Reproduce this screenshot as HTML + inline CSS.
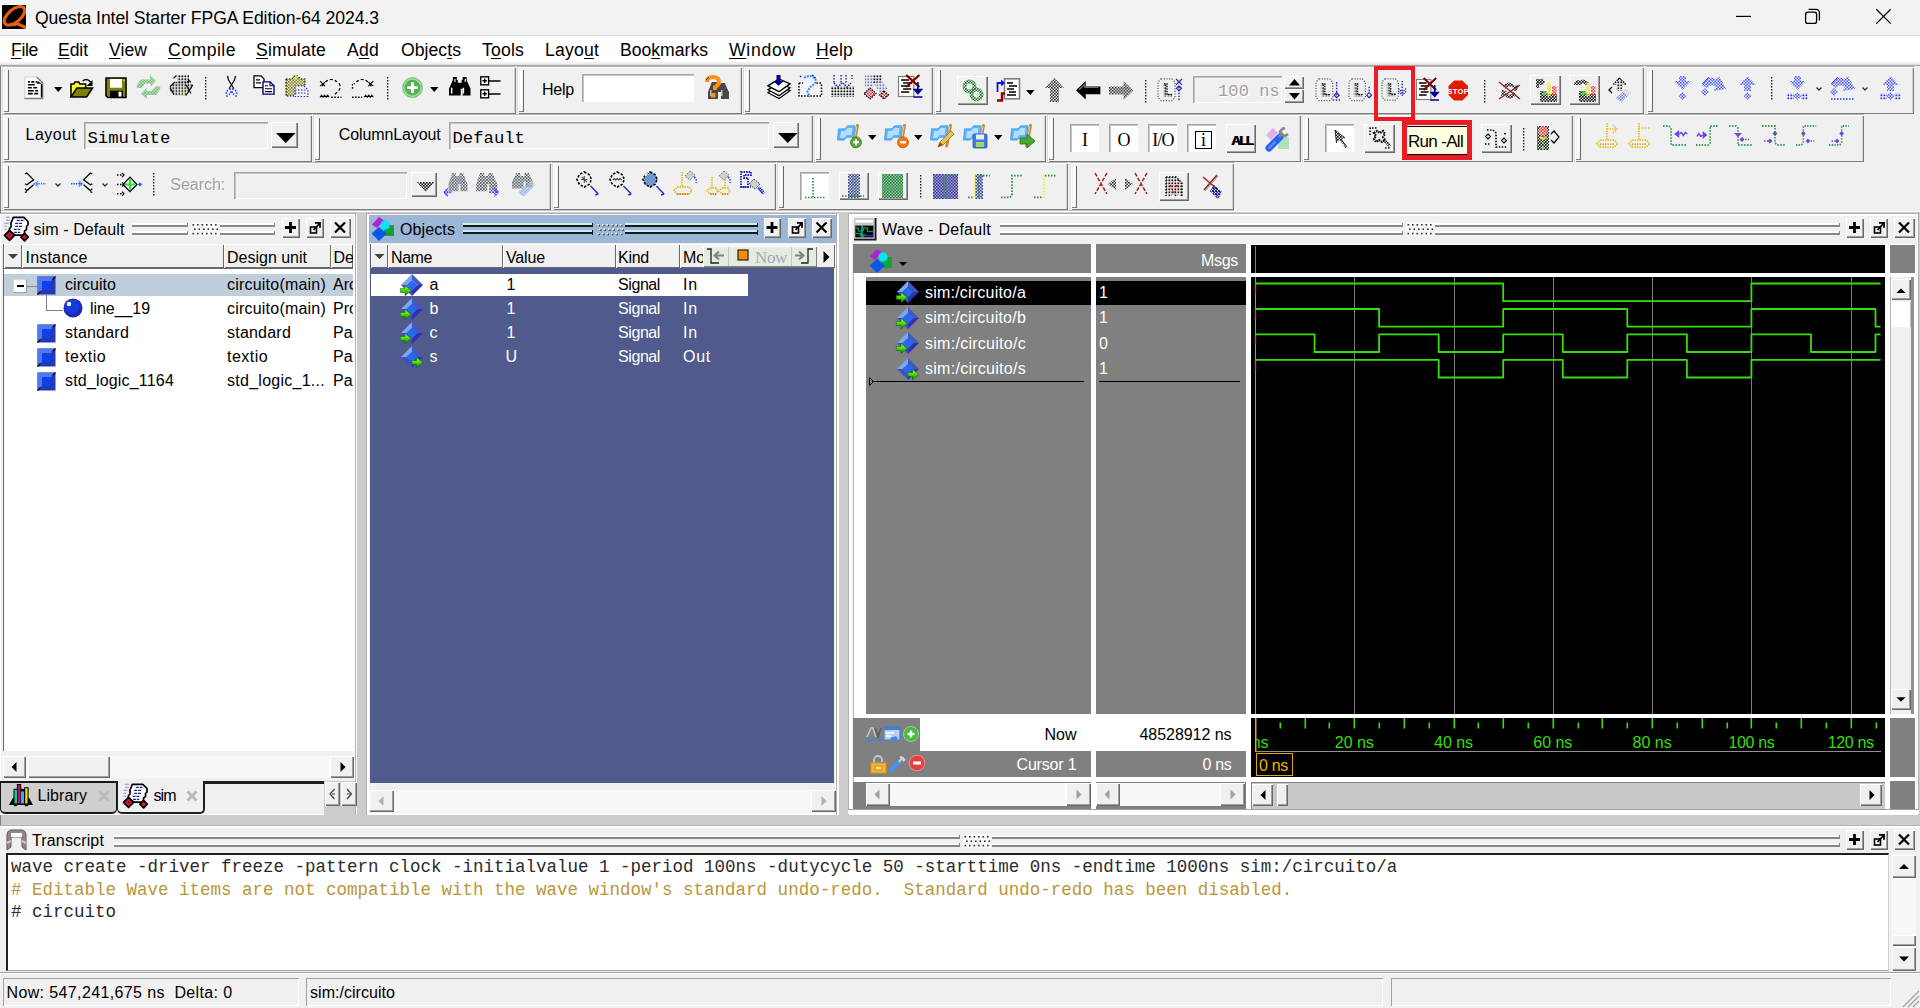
<!DOCTYPE html>
<html><head><meta charset="utf-8"><title>Questa Intel Starter FPGA Edition-64 2024.3</title>
<style>
html,body{margin:0;padding:0;}
body{width:1920px;height:1008px;overflow:hidden;background:#f0f0f0;position:relative;font:16px/1 "Liberation Sans",sans-serif;}
.a{position:absolute;box-sizing:border-box;}
.t{position:absolute;white-space:pre;}
svg{position:absolute;overflow:visible;}
.tb{box-shadow:inset 0 1px #b8b8b8,inset 1px 0 #dcdcdc,inset 2px 2px #fff,inset -1px -1px #7c7c7c,inset -2px 0 #d4d4d4;background:#f0f0f0;}
.gr{border-right:1px solid #696969;border-bottom:1px solid #696969;border-left:2px solid #fff;}
.rs{box-shadow:inset 1px 1px #fff,inset -1px -1px #696969,inset -2px -2px #a0a0a0;background:#f0f0f0;}
.sk{box-shadow:inset 1px 1px #a0a0a0,inset -1px -1px #fff,inset 2px 2px #696969;}
.sk1{box-shadow:inset 1px 1px #a0a0a0,inset -1px -1px #fff;}
.sk2{box-shadow:inset 1px 1px #a4a4a4,inset 2px 2px #c4c4c4,inset -1px -1px #fff;}
.hd{box-shadow:inset 1px 1px #fff,inset -1px -1px #696969;background:#f0f0f0;}
.u{text-decoration:underline;text-decoration-thickness:1px;text-underline-offset:2px;}
</style></head>
<body>
<svg width="0" height="0" style="position:absolute"><defs><pattern id="p0" width="3" height="3" patternUnits="userSpaceOnUse"><rect width="1.6" height="1.6" fill="#5cb060"/><rect x="1.5" y="1.5" width="1.6" height="1.6" fill="#5cb060"/></pattern><pattern id="p1" width="3" height="3" patternUnits="userSpaceOnUse"><rect x="0.5" y="0.5" width="1.7" height="1.7" fill="#000"/></pattern><pattern id="p2" width="3" height="3" patternUnits="userSpaceOnUse"><rect width="1.6" height="1.6" fill="#808010"/><rect x="1.5" y="1.5" width="1.6" height="1.6" fill="#808010"/></pattern><pattern id="p3" width="3" height="3" patternUnits="userSpaceOnUse"><rect x="0.5" y="0.5" width="1.7" height="1.7" fill="#2030e0"/></pattern><pattern id="p4" width="3" height="3" patternUnits="userSpaceOnUse"><rect x="0.5" y="0.5" width="1.7" height="1.7" fill="#7070d0"/></pattern><pattern id="p5" width="3" height="3" patternUnits="userSpaceOnUse"><rect width="1.6" height="1.6" fill="#e02040"/><rect x="1.5" y="1.5" width="1.6" height="1.6" fill="#e02040"/></pattern><pattern id="p6" width="3" height="3" patternUnits="userSpaceOnUse"><rect width="1.6" height="1.6" fill="#107020"/><rect x="1.5" y="1.5" width="1.6" height="1.6" fill="#107020"/></pattern><pattern id="p7" width="3" height="3" patternUnits="userSpaceOnUse"><rect width="1.6" height="1.6" fill="#303030"/><rect x="1.5" y="1.5" width="1.6" height="1.6" fill="#303030"/></pattern><pattern id="p8" width="3" height="3" patternUnits="userSpaceOnUse"><rect width="1.6" height="1.6" fill="#000"/><rect x="1.5" y="1.5" width="1.6" height="1.6" fill="#000"/></pattern><pattern id="p9" width="3" height="3" patternUnits="userSpaceOnUse"><rect width="1.6" height="1.6" fill="#f0e020"/><rect x="1.5" y="1.5" width="1.6" height="1.6" fill="#f0e020"/></pattern><pattern id="p10" width="3" height="3" patternUnits="userSpaceOnUse"><rect width="1.6" height="1.6" fill="#f03030"/><rect x="1.5" y="1.5" width="1.6" height="1.6" fill="#f03030"/></pattern><pattern id="p11" width="3" height="3" patternUnits="userSpaceOnUse"><rect width="1.6" height="1.6" fill="#6080e0"/><rect x="1.5" y="1.5" width="1.6" height="1.6" fill="#6080e0"/></pattern><pattern id="p12" width="3" height="3" patternUnits="userSpaceOnUse"><rect width="1.6" height="1.6" fill="#5060ff"/><rect x="1.5" y="1.5" width="1.6" height="1.6" fill="#5060ff"/></pattern><pattern id="p13" width="3" height="3" patternUnits="userSpaceOnUse"><rect width="1.6" height="1.6" fill="#40a0ff"/><rect x="1.5" y="1.5" width="1.6" height="1.6" fill="#40a0ff"/></pattern><pattern id="p14" width="3" height="3" patternUnits="userSpaceOnUse"><rect x="0.5" y="0.5" width="1.7" height="1.7" fill="#2030ff"/></pattern><pattern id="p15" width="3" height="3" patternUnits="userSpaceOnUse"><rect width="1.6" height="1.6" fill="#ff2020"/><rect x="1.5" y="1.5" width="1.6" height="1.6" fill="#ff2020"/></pattern><pattern id="p16" width="3" height="3" patternUnits="userSpaceOnUse"><rect width="1.6" height="1.6" fill="#3080ff"/><rect x="1.5" y="1.5" width="1.6" height="1.6" fill="#3080ff"/></pattern><pattern id="p17" width="3" height="3" patternUnits="userSpaceOnUse"><rect width="1.6" height="1.6" fill="#3050ff"/><rect x="1.5" y="1.5" width="1.6" height="1.6" fill="#3050ff"/></pattern><pattern id="p18" width="3" height="3" patternUnits="userSpaceOnUse"><rect width="1.6" height="1.6" fill="#505860"/><rect x="1.5" y="1.5" width="1.6" height="1.6" fill="#505860"/></pattern><pattern id="p19" width="3" height="3" patternUnits="userSpaceOnUse"><rect width="1.6" height="1.6" fill="#2030ff"/><rect x="1.5" y="1.5" width="1.6" height="1.6" fill="#2030ff"/></pattern><pattern id="p20" width="3" height="3" patternUnits="userSpaceOnUse"><rect width="1.6" height="1.6" fill="#80a0f0"/><rect x="1.5" y="1.5" width="1.6" height="1.6" fill="#80a0f0"/></pattern><pattern id="p21" width="3" height="3" patternUnits="userSpaceOnUse"><rect width="1.6" height="1.6" fill="#c0c0c0"/><rect x="1.5" y="1.5" width="1.6" height="1.6" fill="#c0c0c0"/></pattern><pattern id="p22" width="3" height="3" patternUnits="userSpaceOnUse"><rect width="1.6" height="1.6" fill="#90b8e0"/><rect x="1.5" y="1.5" width="1.6" height="1.6" fill="#90b8e0"/></pattern><pattern id="p23" width="3" height="3" patternUnits="userSpaceOnUse"><rect width="1.6" height="1.6" fill="#3030a0"/><rect x="1.5" y="1.5" width="1.6" height="1.6" fill="#3030a0"/></pattern><pattern id="p24" width="3" height="3" patternUnits="userSpaceOnUse"><rect width="1.6" height="1.6" fill="#208838"/><rect x="1.5" y="1.5" width="1.6" height="1.6" fill="#208838"/></pattern><pattern id="p25" width="3" height="3" patternUnits="userSpaceOnUse"><rect width="1.6" height="1.6" fill="#2030e0"/><rect x="1.5" y="1.5" width="1.6" height="1.6" fill="#2030e0"/></pattern><linearGradient id="ga" x1="0" y1="0" x2="0" y2="1"><stop offset="0" stop-color="#b0ff20"/><stop offset="0.45" stop-color="#50e010"/><stop offset="1" stop-color="#0c7c0c"/></linearGradient></defs></svg>
<div class="a" style="left:0px;top:0px;width:1920px;height:35px;background:linear-gradient(90deg,#f3f3f3 0,#f5f1f0 50%,#f0f2f5 100%);"></div>
<div class="a" style="left:0px;top:35px;width:1920px;height:1px;background:#d8d8d8;"></div>
<svg class="a" style="left:1px;top:4px;overflow:hidden;" width="26" height="26" viewBox="0 0 26 26"><rect width="26" height="26" fill="#fff"/><rect x="1" y="1" width="24" height="24" fill="#000"/>
<g clip-path="inset(1px)"><ellipse cx="13.500" cy="11.800" rx="12.300" ry="6.300" transform="rotate(-40 13.500 11.800)" fill="none" stroke="#e85c10" stroke-width="3.200"/>
<path d="M9 20.500q4 0.500 7.500-0.800q5 2 10 4.800" fill="none" stroke="#e85c10" stroke-width="3.200"/></g><rect x="0.500" y="0.500" width="25" height="25" fill="none" stroke="#fff" stroke-width="1"/></svg>
<span class="t" style="top:10.40px;font:17.6px/1 'Liberation Sans',sans-serif;color:#000;letter-spacing:-0.077px;left:35.00px;">Questa Intel Starter FPGA Edition-64 2024.3</span>
<svg class="a" style="left:1730px;top:0px;" width="190" height="35" viewBox="0 0 190 35"><path d="M6 16.4h15" stroke="#000" stroke-width="1.2" fill="none"/>
<rect x="75.6" y="12.2" width="11" height="11.2" rx="2.2" fill="none" stroke="#000" stroke-width="1.3"/>
<path d="M78.6 9.4h7.6a3.2 3.2 0 0 1 3.2 3.2v7.8" fill="none" stroke="#000" stroke-width="1.3"/>
<path d="M146.3 9.2l14.4 14.4M160.7 9.2l-14.4 14.4" stroke="#000" stroke-width="1.3" fill="none"/></svg>
<div class="a" style="left:0px;top:36px;width:1920px;height:26px;background:#fff;"></div>
<span class="t" style="left:11px;top:42.30px;font-size:17.6px;letter-spacing:-0.340px;color:#000"><span class="u">F</span>ile</span>
<span class="t" style="left:58px;top:42.30px;font-size:17.6px;letter-spacing:-0.082px;color:#000"><span class="u">E</span>dit</span>
<span class="t" style="left:109px;top:42.30px;font-size:17.6px;letter-spacing:0.042px;color:#000"><span class="u">V</span>iew</span>
<span class="t" style="left:168px;top:42.30px;font-size:17.6px;letter-spacing:0.492px;color:#000"><span class="u">C</span>ompile</span>
<span class="t" style="left:256px;top:42.30px;font-size:17.6px;letter-spacing:0.190px;color:#000"><span class="u">S</span>imulate</span>
<span class="t" style="left:347px;top:42.30px;font-size:17.6px;letter-spacing:0.228px;color:#000">A<span class="u">d</span>d</span>
<span class="t" style="left:401px;top:42.30px;font-size:17.6px;letter-spacing:0.048px;color:#000">Objec<span class="u">t</span>s</span>
<span class="t" style="left:482px;top:42.30px;font-size:17.6px;letter-spacing:0.182px;color:#000">T<span class="u">o</span>ols</span>
<span class="t" style="left:545px;top:42.30px;font-size:17.6px;letter-spacing:0.193px;color:#000">Layo<span class="u">u</span>t</span>
<span class="t" style="left:620px;top:42.30px;font-size:17.6px;letter-spacing:-0.003px;color:#000">Boo<span class="u">k</span>marks</span>
<span class="t" style="left:729px;top:42.30px;font-size:17.6px;letter-spacing:0.734px;color:#000"><span class="u">W</span>indow</span>
<span class="t" style="left:816px;top:42.30px;font-size:17.6px;letter-spacing:0.200px;color:#000"><span class="u">H</span>elp</span>
<div class="a" style="left:0px;top:64px;width:1920px;height:1px;background:#e0e0e0;"></div>
<div class="a" style="left:0px;top:65px;width:1920px;height:1px;background:#a4a4a4;"></div>
<div class="a tb" style="left:2px;top:66px;width:514px;height:48px;"></div>
<div class="a gr" style="left:5px;top:70px;width:4px;height:42px;"></div>
<div class="a" style="left:4px;top:111px;width:2px;height:1px;background:#808080;"></div>
<div class="a tb" style="left:517px;top:66px;width:225px;height:48px;"></div>
<div class="a gr" style="left:520px;top:70px;width:4px;height:42px;"></div>
<div class="a" style="left:519px;top:111px;width:2px;height:1px;background:#808080;"></div>
<div class="a tb" style="left:743px;top:66px;width:190px;height:48px;"></div>
<div class="a gr" style="left:746px;top:70px;width:4px;height:42px;"></div>
<div class="a" style="left:745px;top:111px;width:2px;height:1px;background:#808080;"></div>
<div class="a tb" style="left:934px;top:66px;width:710px;height:48px;"></div>
<div class="a gr" style="left:937px;top:70px;width:4px;height:42px;"></div>
<div class="a" style="left:936px;top:111px;width:2px;height:1px;background:#808080;"></div>
<div class="a tb" style="left:1646px;top:66px;width:268px;height:48px;"></div>
<div class="a gr" style="left:1649px;top:70px;width:4px;height:42px;"></div>
<div class="a" style="left:1648px;top:111px;width:2px;height:1px;background:#808080;"></div>
<div class="a tb" style="left:2px;top:114px;width:310px;height:48px;"></div>
<div class="a gr" style="left:5px;top:118px;width:4px;height:42px;"></div>
<div class="a" style="left:4px;top:159px;width:2px;height:1px;background:#808080;"></div>
<div class="a tb" style="left:313px;top:114px;width:500px;height:48px;"></div>
<div class="a gr" style="left:316px;top:118px;width:4px;height:42px;"></div>
<div class="a" style="left:315px;top:159px;width:2px;height:1px;background:#808080;"></div>
<div class="a tb" style="left:814px;top:114px;width:232px;height:48px;"></div>
<div class="a gr" style="left:817px;top:118px;width:4px;height:42px;"></div>
<div class="a" style="left:816px;top:159px;width:2px;height:1px;background:#808080;"></div>
<div class="a tb" style="left:1047px;top:114px;width:254px;height:48px;"></div>
<div class="a gr" style="left:1050px;top:118px;width:4px;height:42px;"></div>
<div class="a" style="left:1049px;top:159px;width:2px;height:1px;background:#808080;"></div>
<div class="a tb" style="left:1302px;top:114px;width:271px;height:48px;"></div>
<div class="a gr" style="left:1305px;top:118px;width:4px;height:42px;"></div>
<div class="a" style="left:1304px;top:159px;width:2px;height:1px;background:#808080;"></div>
<div class="a tb" style="left:1574px;top:114px;width:290px;height:48px;"></div>
<div class="a gr" style="left:1577px;top:118px;width:4px;height:42px;"></div>
<div class="a" style="left:1576px;top:159px;width:2px;height:1px;background:#808080;"></div>
<div class="a tb" style="left:2px;top:162px;width:549px;height:48px;"></div>
<div class="a gr" style="left:5px;top:166px;width:4px;height:42px;"></div>
<div class="a" style="left:4px;top:207px;width:2px;height:1px;background:#808080;"></div>
<div class="a tb" style="left:552px;top:162px;width:224px;height:48px;"></div>
<div class="a gr" style="left:555px;top:166px;width:4px;height:42px;"></div>
<div class="a" style="left:554px;top:207px;width:2px;height:1px;background:#808080;"></div>
<div class="a tb" style="left:777px;top:162px;width:291px;height:48px;"></div>
<div class="a gr" style="left:780px;top:166px;width:4px;height:42px;"></div>
<div class="a" style="left:779px;top:207px;width:2px;height:1px;background:#808080;"></div>
<div class="a tb" style="left:1070px;top:162px;width:164px;height:48px;"></div>
<div class="a gr" style="left:1073px;top:166px;width:4px;height:42px;"></div>
<div class="a" style="left:1072px;top:207px;width:2px;height:1px;background:#808080;"></div>
<svg class="a" style="left:24px;top:75.5px" width="19.50" height="23.50" viewBox="0 0 20 24" preserveAspectRatio="none"><path d="M1 1h12l6 6v16H1z" fill="#fff"/><path d="M1 1h12M1 1v22" stroke="#d0d0d0" stroke-width="1" fill="none"/><path d="M13 1l6 6M19 7v16.500M0.500 23h19" stroke="#808080" stroke-width="1.6" fill="none"/><path d="M14 5l4 3h-5z" fill="#000"/><path d="M18 8v14" stroke="#000" stroke-width="1.5"/><path d="M4 6h2M7.500 6h3M12 6h1.500M4 9h7M4 12h4M9.500 12h4M4 15h6M11.500 15h3M4 18h5M10.500 18h4" stroke="#000" stroke-width="1.600"/></svg>
<svg class="a" style="left:53.5px;top:87px" width="8.50" height="5.00" viewBox="0 0 8.5 5" preserveAspectRatio="none"><path d="M0 0h8.500l-4.250 5z" fill="#000"/></svg>
<svg class="a" style="left:70px;top:78px" width="23.50" height="20.00" viewBox="0 0 24 20" preserveAspectRatio="none"><path d="M1 19V6h3l1-2h4l1 2h6v4" fill="#ffff30" stroke="#000" stroke-width="1.600"/><path d="M1 19l6-9h16l-6 9z" fill="#808000" stroke="#000" stroke-width="1.600"/><path d="M13 3q4-3.500 8 1" fill="none" stroke="#000" stroke-width="1.400"/><path d="M23 2v6h-6z" fill="#000"/></svg>
<svg class="a" style="left:104.5px;top:76.5px" width="22.00" height="21.50" viewBox="0 0 22 22" preserveAspectRatio="none"><path d="M1 1h20v20H3l-2-2z" fill="#808000" stroke="#000" stroke-width="1.600"/><rect x="5" y="2" width="12" height="9" fill="#fff"/><rect x="5" y="14" width="13" height="7" fill="#000"/><rect x="13.500" y="15" width="3" height="5" fill="#fff"/><rect x="18.500" y="2.500" width="1.500" height="2" fill="#d0d060"/></svg>
<svg class="a" style="left:136px;top:75px" width="25.00" height="24.60" viewBox="0 0 25 24.6" preserveAspectRatio="none"><path d="M0.500 11L5 4.500H14V0.500L20 5.500L14.500 11.500V8.500H9.500L5.500 13H1z" fill="url(#p0)"/><path d="M0.500 11L5 4.500H14V0.500L20 5.500L14.500 11.500V8.500H9.500L5.500 13H1z" fill="#80c884" opacity="0.350"/><g transform="rotate(180 12.500 12.300)"><path d="M0.500 11L5 4.500H14V0.500L20 5.500L14.500 11.500V8.500H9.500L5.500 13H1z" fill="url(#p0)"/><path d="M0.500 11L5 4.500H14V0.500L20 5.500L14.500 11.500V8.500H9.500L5.500 13H1z" fill="#80c884" opacity="0.350"/></g></svg>
<svg class="a" style="left:169px;top:75px" width="25.00" height="21.50" viewBox="0 0 25 22" preserveAspectRatio="none"><path d="M8 0h12v9H8z" fill="url(#p1)"/><path d="M1 12l5-5h14l4 4-6 10H5l-4-5z" fill="url(#p1)"/><path d="M4.500 3.500l3-3M1 12l5-5M1 13l4 7" fill="none" stroke="#000" stroke-width="1.2" /><path d="M17 10l5 9M24 10l-7 11M18 7.500l2-2 2 2" fill="none" stroke="#000" stroke-width="1.1" /><circle cx="12" cy="18.500" r="1" fill="#f0f020"/><circle cx="15" cy="18.500" r="1" fill="#f0f020"/></svg>
<svg class="a" style="left:205.3px;top:76.5px" width="1.40" height="23.10" viewBox="0 0 1.4 23.099999999999994" preserveAspectRatio="none"><path d="M0.700 0V23.099999999999994" fill="none" stroke="#202020" stroke-width="1.4" stroke-dasharray="1.5 1.5" /></svg>
<svg class="a" style="left:224px;top:76px" width="15.00" height="22.00" viewBox="0 0 15 22" preserveAspectRatio="none"><path d="M3.500 0l1 4 5 8M11.500 0l-1 4-5 8" fill="none" stroke="#000" stroke-width="1.2" /><path d="M6 12l-4 4 1 4 4-3zM9 12l4 4-1 4-4-3z" fill="none" stroke="#3030ff" stroke-width="1.5" stroke-dasharray="1.5 1.5" /></svg>
<svg class="a" style="left:253px;top:75px" width="23.00" height="19.60" viewBox="0 0 23 20" preserveAspectRatio="none"><path d="M1 1h7l3 3v9H1z" fill="#fff" stroke="#000" stroke-width="1.300"/><path d="M3 5h4M3 8h5" stroke="#000" stroke-width="1.100"/><path d="M10 7h7l4 4v8.500H10z" fill="#fff" stroke="#000080" stroke-width="1.400"/><path d="M17 7v4h4" fill="none" stroke="#000080" stroke-width="1.100"/><path d="M12 11h3M12 14h7M12 17h7" stroke="#000" stroke-width="1.200"/></svg>
<svg class="a" style="left:285px;top:75px" width="24.00" height="22.00" viewBox="0 0 24 22" preserveAspectRatio="none"><path d="M1 4h6l2-3h4l2 3h5v17H1z" fill="url(#p2)"/><path d="M1 4h6l2-3h4l2 3h5v6M1 4v17h8" fill="none" stroke="#000" stroke-width="1.1" stroke-dasharray="1.500 1.500" /><path d="M9 4l2-2 2 0" stroke="#f0f020" stroke-width="1.500" fill="none"/><path d="M10 11h9l4 4v7H10z" fill="#f0f0f0"/><path d="M10 11h9l4 4v6.500H10zM10 15h12M10 18h12" fill="none" stroke="#2030e0" stroke-width="1.2" stroke-dasharray="1.500 1.500" /></svg>
<svg class="a" style="left:319px;top:76.5px" width="23.50" height="21.25" viewBox="0 0 23 21" preserveAspectRatio="none"><path d="M3 9q8-12 17-2q3 5-6 11" fill="none" stroke="#000" stroke-width="1.2" stroke-dasharray="3 2" /><path d="M1 4l5 5M1 9l5-4" fill="none" stroke="#000" stroke-width="1" /><path d="M1 20l1.500-2 1.500 2 1.500-2 1.500 2 1.500-2 1.500 2" fill="none" stroke="#000" stroke-width="1" /><path d="M12 20h10" fill="none" stroke="#000" stroke-width="1.3" stroke-dasharray="1.500 1.500" /></svg>
<svg class="a" style="left:350.6px;top:76.5px" width="23.40" height="21.25" viewBox="0 0 23 21" preserveAspectRatio="none"><path d="M20 9q-8-12-17-2" fill="none" stroke="#000" stroke-width="1.2" stroke-dasharray="3 2" /><path d="M22 4l-5 5M22 9l-5-4" fill="none" stroke="#000" stroke-width="1" /><path d="M22 20l-1.500-2-1.500 2-1.500-2-1.500 2-1.500-2-1.500 2" fill="none" stroke="#000" stroke-width="1" /><path d="M1 20h10" fill="none" stroke="#000" stroke-width="1.3" stroke-dasharray="1.500 1.500" /><path d="M1.500 7v6" fill="none" stroke="#000" stroke-width="1.3" stroke-dasharray="1.5 1.5" /></svg>
<svg class="a" style="left:387.3px;top:76.5px" width="1.40" height="23.10" viewBox="0 0 1.4 23.099999999999994" preserveAspectRatio="none"><path d="M0.700 0V23.099999999999994" fill="none" stroke="#202020" stroke-width="1.4" stroke-dasharray="1.5 1.5" /></svg>
<svg class="a" style="left:402px;top:76.5px" width="21.00" height="21.25" viewBox="0 0 21 21" preserveAspectRatio="none"><circle cx="10.500" cy="10.500" r="10" fill="#58b058"/><circle cx="10.500" cy="10.500" r="8.600" fill="none" stroke="#a4dca0" stroke-width="1.600"/><circle cx="10.500" cy="10.500" r="10" fill="none" stroke="#88c888" stroke-width="0.800"/><path d="M10.500 6.300v8.400M6.300 10.500h8.400" stroke="#fff" stroke-width="2.700" stroke-linecap="round"/></svg>
<svg class="a" style="left:430px;top:87px" width="8.50" height="5.00" viewBox="0 0 8.5 5" preserveAspectRatio="none"><path d="M0 0h8.500l-4.250 5z" fill="#000"/></svg>
<svg class="a" style="left:447.5px;top:76.5px" width="23.50" height="19.50" viewBox="0 0 24 20" preserveAspectRatio="none"><path d="M5 0h4v3h1v3h4V3h1V0h4v3l4 9v7h-8v-7h-2v7H1v-7l4-9z" fill="#000"/><rect x="3" y="11" width="1.500" height="6" fill="#fff"/><rect x="15" y="11" width="1.500" height="6" fill="#fff"/><rect x="6.500" y="2" width="1.200" height="3" fill="#fff"/><rect x="17" y="2" width="1.200" height="3" fill="#fff"/></svg>
<svg class="a" style="left:480px;top:76px" width="20.50" height="23.00" viewBox="0 0 21 23" preserveAspectRatio="none"><rect x="0.800" y="0.800" width="8" height="8" fill="#fff" stroke="#000" stroke-width="1.400"/><rect x="0.800" y="13.800" width="8" height="8" fill="#fff" stroke="#000" stroke-width="1.400"/><path d="M9 5h12M9 18h12M2.500 4.800h4.500M4.800 2.500v4.500M2.500 17.800h4.500M4.800 15.500v4.500" fill="none" stroke="#000" stroke-width="1.5" /></svg>
<span class="t" style="top:82.26px;font:16px/1 'Liberation Sans',sans-serif;color:#000;letter-spacing:-0.227px;left:542.00px;">Help</span>
<div class="a sk2" style="left:582px;top:74px;width:112px;height:28px;background:#fff;"></div>
<svg class="a" style="left:705px;top:76px" width="25.00" height="23.00" viewBox="0 0 25 23" preserveAspectRatio="none"><path d="M7 6h5v3h3l1-2h4l1 3 3 6v7h-8v-7h-3v7H3v-7l3-8z" fill="#484848"/><rect x="5" y="14" width="1.500" height="6" fill="#c0c0c0"/><rect x="16" y="14" width="1.500" height="6" fill="#c0c0c0"/><path d="M2 6q0-5 6-5t6 5q0 3-4 5v3" stroke="#ff9010" stroke-width="4" fill="none"/><rect x="6" y="17" width="4.500" height="4.500" fill="#ff9010"/><path d="M1 4l3-3" stroke="#603000" stroke-width="1"/></svg>
<svg class="a" style="left:767px;top:75px" width="23.00" height="24.60" viewBox="0 0 23 25" preserveAspectRatio="none"><path d="M1 18l11 6 11-8-11-5z" fill="#fff" stroke="#000" stroke-width="1.300"/><path d="M1 15l11 6 11-8-11-5z" fill="#fff" stroke="#000" stroke-width="1.300"/><path d="M1 11l11 6 11-8-11-5z" fill="#fff" stroke="#000" stroke-width="1.400"/><path d="M9.500 0h4v6h3.500l-5.500 5-5.500-5h3.500z" fill="#000090"/></svg>
<svg class="a" style="left:798px;top:75px" width="24.50" height="23.00" viewBox="0 0 24 23" preserveAspectRatio="none"><rect x="1" y="8" width="22" height="13" fill="#f6f6f6"/><path d="M1 8v13h22V8M1 8h4M18 8h5" fill="none" stroke="#000" stroke-width="1.5" stroke-dasharray="1.500 1.500" /><path d="M6 3q6-4 10 0t-4 9l-3 5 3 5" fill="none" stroke="#3090ff" stroke-width="2" stroke-dasharray="2 1" /><path d="M2 1l2 2M14 0l4 4" fill="none" stroke="#1020a0" stroke-width="1.5" stroke-dasharray="1.500 1.500" /></svg>
<svg class="a" style="left:831px;top:75px" width="23.00" height="22.00" viewBox="0 0 23 22" preserveAspectRatio="none"><rect x="0" y="11" width="23" height="11" fill="url(#p1)"/><path d="M3 0v8M10 0v8M15 0v8M21 0v4" fill="none" stroke="#2828b0" stroke-width="1.5" stroke-dasharray="1.500 1.500" /><path d="M3 8l4 4 4-4M12 8l4 4 4-4" fill="none" stroke="#2828b0" stroke-width="1.6" stroke-dasharray="1.500 1" /></svg>
<svg class="a" style="left:864px;top:75px" width="25.00" height="24.00" viewBox="0 0 25 24" preserveAspectRatio="none"><rect x="1" y="0" width="8" height="12" fill="url(#p4)"/><rect x="9" y="0" width="9" height="8" fill="url(#p1)"/><path d="M9 8l9-2 6 8-8 4z" fill="url(#p4)"/><path d="M6 13l6 5.500-6 5.500-6-5.500z" fill="#fff"/><path d="M6 13l6 5.500-6 5.500-6-5.500z" fill="url(#p5)"/><path d="M6 13l6 5.500-6 5.500-6-5.500z" fill="none" stroke="#000" stroke-width="1.2" stroke-dasharray="1.500 1" /><path d="M20 16l4.500 4-4.500 4-4.500-4z" fill="#fff"/><path d="M20 16l4.500 4-4.500 4-4.500-4z" fill="url(#p5)"/><path d="M20 16l4.500 4-4.500 4-4.500-4z" fill="none" stroke="#000" stroke-width="1.2" stroke-dasharray="1.500 1" /></svg>
<svg class="a" style="left:897.5px;top:75px" width="24.50" height="23.00" viewBox="0 0 24 23" preserveAspectRatio="none"><rect x="0.500" y="1.500" width="15" height="20" fill="#fff" stroke="#808080" stroke-width="1.200"/><path d="M3 5h8M5 8h9M3 11h9M5 14h8M3 17h8" stroke="#000" stroke-width="1.500"/><path d="M8 0l13 12M21 0L8 12" stroke="#800000" stroke-width="2.200"/><path d="M19.500 7v11M16 14.500l3.500 4 3.500-4zM15 22h9" stroke="#000090" stroke-width="1.600" fill="#000090"/></svg>
<div class="a rs" style="left:957px;top:76px;width:31px;height:29px;background:#f0f0f0;"></div>
<svg class="a" style="left:962px;top:79px" width="22.00" height="23.00" viewBox="0 0 22 23" preserveAspectRatio="none"><circle cx="7.500" cy="7.500" r="7" fill="url(#p6)"/><circle cx="7.500" cy="7.500" r="3" fill="#f0f0f0"/><circle cx="14.500" cy="15.500" r="7" fill="url(#p6)"/><circle cx="14.500" cy="15.500" r="3" fill="#f0f0f0"/></svg>
<svg class="a" style="left:996px;top:78px" width="24.00" height="24.00" viewBox="0 0 24 24" preserveAspectRatio="none"><rect x="8.500" y="0.800" width="15" height="20" fill="#fff" stroke="#808080" stroke-width="1.600"/><path d="M11 5h6M13 8h8M11 11h7M13 14h7M11 17h9" stroke="#000" stroke-width="1.600"/><path d="M1.500 14V5h4" stroke="#1010ff" stroke-width="1.800" fill="none"/><path d="M5 1.500l4 3.500-4 3.500z" fill="#1010ff"/><path d="M1 22.500h5v-7h3" stroke="#900000" stroke-width="2.400" fill="none"/></svg>
<svg class="a" style="left:1026px;top:90px" width="8.50" height="5.00" viewBox="0 0 8.5 5" preserveAspectRatio="none"><path d="M0 0h8.500l-4.250 5z" fill="#000"/></svg>
<svg class="a" style="left:1045px;top:78px" width="19.00" height="24.00" viewBox="0 0 19 24" preserveAspectRatio="none"><path d="M9.500 0l9.500 10h-5v14h-9V10h-5z" fill="url(#p7)"/></svg>
<svg class="a" style="left:1075.6px;top:81px" width="24.40" height="18.60" viewBox="0 0 25 19" preserveAspectRatio="none"><path d="M0 9.500L10 0v5.500h15v8H10V19z" fill="#000"/><path d="M3 9l6-5.500v3h14" stroke="#707070" stroke-width="1.300" fill="none"/></svg>
<svg class="a" style="left:1108.7px;top:81px" width="24.30" height="19.00" viewBox="0 0 25 19" preserveAspectRatio="none"><path d="M25 9.500L15 0v5.500H0v8h15V19z" fill="url(#p7)"/></svg>
<svg class="a" style="left:1145.3px;top:79.6px" width="1.40" height="22.40" viewBox="0 0 1.4 22.400000000000006" preserveAspectRatio="none"><path d="M0.700 0V22.400000000000006" fill="none" stroke="#202020" stroke-width="1.4" stroke-dasharray="1.5 1.5" /></svg>
<svg class="a" style="left:1158px;top:78px" width="25.00" height="23.50" viewBox="0 0 25 24" preserveAspectRatio="none"><path d="M3 1h11l3 3v16l-3 3H3l-3-3V4z" fill="none" stroke="#606060" stroke-width="1.3" stroke-dasharray="1.200 1.500" /><path d="M5 5h4v11h5v3H5z" fill="url(#p1)"/><path d="M6 6h3v11h5" fill="none" stroke="#000" stroke-width="1.3" stroke-dasharray="1.500 1" /><path d="M21 9v14" fill="none" stroke="#2828b0" stroke-width="1.5" stroke-dasharray="1.500 1.500" /><path d="M18 1l6 6M24 1l-6 6" fill="none" stroke="#2828b0" stroke-width="1.2" /><path d="M21 8l2.500 2.500-2.500 2.500-2.500-2.500z" fill="none" stroke="#2828b0" stroke-width="1.2" /></svg>
<div class="a sk2" style="left:1193px;top:76px;width:89px;height:27px;background:#f0f0f0;"></div>
<span class="t" style="top:83.24px;font:17.2px/1 'Liberation Mono',monospace;color:#a0a0a0;left:1218.00px;text-shadow:1px 1px #fff;">100 ns</span>
<div class="a rs" style="left:1284px;top:76px;width:20px;height:13px;background:#f0f0f0;"></div>
<div class="a rs" style="left:1284px;top:89px;width:20px;height:14px;background:#f0f0f0;"></div>
<svg class="a" style="left:1288.5px;top:79px" width="11.00" height="6.50" viewBox="0 0 11 6.5" preserveAspectRatio="none"><path d="M0 6.500L5.500 0 11 6.500z" fill="#000"/></svg>
<svg class="a" style="left:1288.5px;top:93px" width="11.00" height="6.50" viewBox="0 0 11 6.5" preserveAspectRatio="none"><path d="M0 0l5.500 6.500L11 0z" fill="#000"/></svg>
<svg class="a" style="left:1316px;top:78px" width="24.60" height="23.50" viewBox="0 0 25 24" preserveAspectRatio="none"><path d="M3 1h11l3 3v16l-3 3H3l-3-3V4z" fill="none" stroke="#606060" stroke-width="1.3" stroke-dasharray="1.200 1.500" /><path d="M5 5h4v11h5v3H5z" fill="url(#p1)"/><path d="M6 6h3v11h5" fill="none" stroke="#000" stroke-width="1.3" stroke-dasharray="1.500 1" /><path d="M21 4v14" fill="none" stroke="#2828b0" stroke-width="1.5" stroke-dasharray="1.500 1.500" /><path d="M21 15l2.500 2.500-2.500 2.500-2.500-2.500z" fill="none" stroke="#2828b0" stroke-width="1.2" /><path d="M17 22.500h8" fill="none" stroke="#2828b0" stroke-width="1.5" stroke-dasharray="1.500 1.500" /></svg>
<svg class="a" style="left:1348.7px;top:78px" width="24.00" height="23.50" viewBox="0 0 25 24" preserveAspectRatio="none"><path d="M3 1h11l3 3v16l-3 3H3l-3-3V4z" fill="none" stroke="#606060" stroke-width="1.3" stroke-dasharray="1.200 1.500" /><path d="M5 5h4v11h5v3H5z" fill="url(#p1)"/><path d="M6 6h3v11h5" fill="none" stroke="#000" stroke-width="1.3" stroke-dasharray="1.500 1" /><path d="M21 9v6" fill="none" stroke="#2828b0" stroke-width="1.5" stroke-dasharray="1.500 1.500" /><path d="M21 15l2.500 2.500-2.500 2.500-2.500-2.500z" fill="none" stroke="#2828b0" stroke-width="1.2" /></svg>
<svg class="a" style="left:1382.4px;top:78px" width="24.10" height="23.00" viewBox="0 0 25 24" preserveAspectRatio="none"><path d="M3 1h11l3 3v16l-3 3H3l-3-3V4z" fill="none" stroke="#606060" stroke-width="1.3" stroke-dasharray="1.200 1.500" /><path d="M5 5h4v11h5v3H5z" fill="url(#p1)"/><path d="M6 6h3v11h5" fill="none" stroke="#000" stroke-width="1.3" stroke-dasharray="1.500 1" /><path d="M21 3v14" fill="none" stroke="#2828b0" stroke-width="1.5" stroke-dasharray="1.500 1.500" /><path d="M17 11l4 4 4-4M17 14l4 4 4-4" fill="none" stroke="#2828b0" stroke-width="1.3" stroke-dasharray="1.500 1" /></svg>
<svg class="a" style="left:1416px;top:78px" width="23.00" height="23.00" viewBox="0 0 24 23" preserveAspectRatio="none"><rect x="0.500" y="1.500" width="15" height="20" fill="#fff" stroke="#808080" stroke-width="1.200"/><path d="M3 5h8M5 8h9M3 11h9M5 14h8M3 17h8" stroke="#000" stroke-width="1.500"/><path d="M8 0l13 12M21 0L8 12" stroke="#800000" stroke-width="2.200"/><path d="M19.500 7v11M16 14.500l3.500 4 3.500-4zM15 22h9" stroke="#000090" stroke-width="1.600" fill="#000090"/></svg>
<svg class="a" style="left:1448px;top:80px" width="20.50" height="21.00" viewBox="0 0 20 21" preserveAspectRatio="none"><path d="M6 0.500h8l5.500 5.500v9L14 20.500H6L0.500 15V6z" fill="#e01c00"/><text x="10" y="14" font-family="Liberation Sans,sans-serif" font-weight="bold" font-size="7.500" fill="#fff" text-anchor="middle" letter-spacing="0.300">STOP</text></svg>
<svg class="a" style="left:1484.3px;top:79.7px" width="1.40" height="23.30" viewBox="0 0 1.4 23.299999999999997" preserveAspectRatio="none"><path d="M0.700 0V23.299999999999997" fill="none" stroke="#202020" stroke-width="1.4" stroke-dasharray="1.5 1.5" /></svg>
<svg class="a" style="left:1499px;top:81px" width="21.00" height="19.00" viewBox="0 0 21 19" preserveAspectRatio="none"><path d="M4 5q6-7 12 0l3-1-1 6-5-1 2-2q-5-4-9 1zM17 14q-6 7-12 0l-3 1 1-6 5 1-2 2q5 4 9-1z" fill="url(#p8)"/><path d="M0 1l21 17M21 4L0 18" fill="none" stroke="#901818" stroke-width="1.2" /></svg>
<div class="a rs" style="left:1530px;top:75px;width:31px;height:30px;background:#f0f0f0;"></div>
<svg class="a" style="left:1534px;top:78px" width="24.00" height="24.00" viewBox="0 0 24 24" preserveAspectRatio="none"><path d="M2 1h7l2 3-2 3H5v3H2z" fill="url(#p8)"/><path d="M6 13h6l2 3h9v8H6z" fill="url(#p8)"/><rect x="13" y="5" width="4" height="13" fill="url(#p9)"/><rect x="18" y="8" width="4.500" height="10" fill="url(#p10)"/><path d="M9 13l5 2-5 3z" fill="#40e040"/></svg>
<div class="a rs" style="left:1569px;top:75px;width:31px;height:30px;background:#f0f0f0;"></div>
<svg class="a" style="left:1573px;top:78px" width="24.00" height="24.00" viewBox="0 0 24 24" preserveAspectRatio="none"><path d="M1 6q2-6 6-3q3-3 6 0q3 0 3 4h-3l-3-2-3 2H1z" fill="url(#p8)"/><path d="M6 13h6l2 3h9v8H6z" fill="url(#p8)"/><rect x="13" y="5" width="4" height="13" fill="url(#p9)"/><rect x="18" y="8" width="4.500" height="10" fill="url(#p10)"/><path d="M9 13l5 2-5 3z" fill="#40e040"/></svg>
<svg class="a" style="left:1608.4px;top:78px" width="23.00" height="24.00" viewBox="0 0 23 24" preserveAspectRatio="none"><path d="M11.500 0l7 7h-4v6h-6V7h-4z" fill="url(#p1)"/><path d="M11.500 0l7 7M11.500 0l-7 7" fill="none" stroke="#000" stroke-width="1.2" stroke-dasharray="1.500 1" /><path d="M4 9l-3 3 3 3" fill="none" stroke="#000" stroke-width="1.3" /><path d="M8 20l10-9 5 4-10 9z" fill="url(#p11)"/><path d="M18 11l5 4-3 3-5-4z" fill="#e0e0e0"/></svg>
<svg class="a" style="left:1673.5px;top:75.7px" width="17.00" height="24.00" viewBox="0 0 17 24" preserveAspectRatio="none"><path d="M5 0h7v5h5l-8.500 9L0 5h5z" fill="url(#p12)"/><path d="M8.500 16l4 4-4 4-4-4z" fill="url(#p12)"/></svg>
<svg class="a" style="left:1701px;top:76.4px" width="25.00" height="20.00" viewBox="0 0 25 20" preserveAspectRatio="none"><path d="M1 9q5-11 14-6l3-3 7 13-13 2 3-4q-5-4-9 1z" fill="url(#p12)"/><path d="M4 12l4 4-4 4-4-4z" fill="url(#p12)"/><path d="M1 8l7-7" fill="none" stroke="#4050e0" stroke-width="1" /></svg>
<svg class="a" style="left:1739px;top:75.7px" width="17.00" height="24.00" viewBox="0 0 17 24" preserveAspectRatio="none"><path d="M8.500 0L17 9h-5v6H5V9H0z" fill="url(#p12)"/><path d="M8.500 16l4 4-4 4-4-4z" fill="url(#p12)"/></svg>
<svg class="a" style="left:1771.0px;top:77px" width="1.40" height="22.70" viewBox="0 0 1.4 22.700000000000003" preserveAspectRatio="none"><path d="M0.700 0V22.700000000000003" fill="none" stroke="#202020" stroke-width="1.4" stroke-dasharray="1.5 1.5" /></svg>
<svg class="a" style="left:1787px;top:75.7px" width="21.00" height="24.00" viewBox="0 0 21 24" preserveAspectRatio="none"><g transform="translate(2,0)"><path d="M5 0h7v5h5l-8.500 9L0 5h5z" fill="url(#p12)"/><path d="M8.500 16l4 4-4 4-4-4z" fill="url(#p12)"/></g><rect x="0" y="17" width="7" height="7" fill="url(#p14)"/><rect x="14" y="17" width="7" height="7" fill="url(#p14)"/></svg>
<svg class="a" style="left:1815.7px;top:87px" width="6.00" height="4.00" viewBox="0 0 6 4" preserveAspectRatio="none"><path d="M0.500 0.500l2.500 2.500 2.500-2.500" fill="none" stroke="#303030" stroke-width="1.3" /></svg>
<svg class="a" style="left:1830px;top:76.4px" width="26.00" height="24.00" viewBox="0 0 26 24" preserveAspectRatio="none"><path d="M1 9q5-11 14-6l3-3 7 13-13 2 3-4q-5-4-9 1z" fill="url(#p12)"/><path d="M4 12l4 4-4 4-4-4z" fill="url(#p12)"/><path d="M1 8l7-7" fill="none" stroke="#4050e0" stroke-width="1" /><path d="M1 23h24" fill="none" stroke="#2030ff" stroke-width="1.6" stroke-dasharray="1.500 1.500" /></svg>
<svg class="a" style="left:1862px;top:87px" width="6.00" height="4.00" viewBox="0 0 6 4" preserveAspectRatio="none"><path d="M0.500 0.500l2.500 2.500 2.500-2.500" fill="none" stroke="#303030" stroke-width="1.3" /></svg>
<svg class="a" style="left:1880px;top:75.7px" width="21.00" height="24.00" viewBox="0 0 21 24" preserveAspectRatio="none"><g transform="translate(2,0)"><path d="M8.500 0L17 9h-5v6H5V9H0z" fill="url(#p12)"/><path d="M8.500 16l4 4-4 4-4-4z" fill="url(#p12)"/></g><rect x="0" y="17" width="7" height="7" fill="url(#p14)"/><rect x="14" y="17" width="7" height="7" fill="url(#p14)"/></svg>
<span class="t" style="top:127.36px;font:16px/1 'Liberation Sans',sans-serif;color:#000;letter-spacing:0.493px;left:25.50px;">Layout</span>
<div class="a sk2" style="left:84px;top:122px;width:184px;height:27px;background:#f0f0f0;"></div>
<span class="t" style="top:130.20px;font:17.25px/1 'Liberation Mono',monospace;color:#000;left:87.50px;">Simulate</span>
<div class="a rs" style="left:271px;top:122px;width:26.5px;height:26px;background:#f0f0f0;"></div>
<svg class="a" style="left:275.5px;top:133px" width="19.50" height="10.00" viewBox="0 0 19.5 10" preserveAspectRatio="none"><path d="M0 0h19.500L9.750 10z" fill="#000"/></svg>
<span class="t" style="top:127.36px;font:16px/1 'Liberation Sans',sans-serif;color:#000;letter-spacing:-0.098px;left:338.70px;">ColumnLayout</span>
<div class="a sk2" style="left:449px;top:122px;width:320px;height:27px;background:#f0f0f0;"></div>
<span class="t" style="top:130.20px;font:17.25px/1 'Liberation Mono',monospace;color:#000;left:452.50px;">Default</span>
<div class="a rs" style="left:773px;top:122px;width:25.5px;height:26px;background:#f0f0f0;"></div>
<svg class="a" style="left:777.5px;top:133px" width="19.50" height="10.00" viewBox="0 0 19.5 10" preserveAspectRatio="none"><path d="M0 0h19.500L9.750 10z" fill="#000"/></svg>
<svg class="a" style="left:837px;top:125px" width="25.00" height="23.00" viewBox="0 0 25 23" preserveAspectRatio="none"><path d="M20.500 0.500l-3.800 20.500" stroke="#c08838" stroke-width="3" stroke-linecap="round"/><path d="M20 1l-2.500 13" stroke="#e8cc98" stroke-width="1"/><path d="M1.500 3.800h6.500l2.500-3h7.500l-1.200 11.500h-7l-2.500 2.800H0.500z" fill="#5cb4fc" stroke="#3c9cf0" stroke-width="0.800" stroke-linejoin="round"/><path d="M4 6h4l2.500-3h5l-0.800 7h-5l-2.500 3H3z" fill="#b4dcfc"/><circle cx="19" cy="17.300" r="5.500" fill="#58a838" stroke="#388020" stroke-width="0.800"/><path d="M19 14.300v6M16 17.300h6" stroke="#fff" stroke-width="2"/></svg>
<svg class="a" style="left:883.6px;top:125px" width="25.00" height="23.00" viewBox="0 0 25 23" preserveAspectRatio="none"><path d="M20.500 0.500l-3.800 20.500" stroke="#c08838" stroke-width="3" stroke-linecap="round"/><path d="M20 1l-2.500 13" stroke="#e8cc98" stroke-width="1"/><path d="M1.500 3.800h6.500l2.500-3h7.500l-1.200 11.500h-7l-2.500 2.800H0.500z" fill="#5cb4fc" stroke="#3c9cf0" stroke-width="0.800" stroke-linejoin="round"/><path d="M4 6h4l2.500-3h5l-0.800 7h-5l-2.500 3H3z" fill="#b4dcfc"/><circle cx="19" cy="17.300" r="5.500" fill="#f07818" stroke="#c85800" stroke-width="0.800"/><path d="M16 17.300h6" stroke="#fff" stroke-width="2.200"/></svg>
<svg class="a" style="left:930px;top:125px" width="25.00" height="23.00" viewBox="0 0 25 23" preserveAspectRatio="none"><path d="M20.500 0.500l-3.800 20.500" stroke="#c08838" stroke-width="3" stroke-linecap="round"/><path d="M20 1l-2.500 13" stroke="#e8cc98" stroke-width="1"/><path d="M1.500 3.800h6.500l2.500-3h7.500l-1.200 11.500h-7l-2.500 2.800H0.500z" fill="#5cb4fc" stroke="#3c9cf0" stroke-width="0.800" stroke-linejoin="round"/><path d="M4 6h4l2.500-3h5l-0.800 7h-5l-2.500 3H3z" fill="#b4dcfc"/><path d="M8 22l2-5 11-11 3 3-11 11z" fill="#f0c050" stroke="#a07020" stroke-width="0.800"/><path d="M8 22l2-5 3 3z" fill="#805020"/></svg>
<svg class="a" style="left:963px;top:125px" width="25.00" height="23.00" viewBox="0 0 25 23" preserveAspectRatio="none"><path d="M20.500 0.500l-3.800 20.500" stroke="#c08838" stroke-width="3" stroke-linecap="round"/><path d="M20 1l-2.500 13" stroke="#e8cc98" stroke-width="1"/><path d="M1.500 3.800h6.500l2.500-3h7.500l-1.200 11.500h-7l-2.500 2.800H0.500z" fill="#5cb4fc" stroke="#3c9cf0" stroke-width="0.800" stroke-linejoin="round"/><path d="M4 6h4l2.500-3h5l-0.800 7h-5l-2.500 3H3z" fill="#b4dcfc"/><rect x="10" y="9" width="14" height="14" rx="1" fill="#4878e0" stroke="#2850b0" stroke-width="0.800"/><rect x="13" y="9.500" width="8" height="5" fill="#e8f0ff"/><rect x="13" y="17" width="8" height="5" fill="#a0d860"/></svg>
<svg class="a" style="left:1009.8px;top:125px" width="25.00" height="23.00" viewBox="0 0 25 23" preserveAspectRatio="none"><path d="M20.500 0.500l-3.800 20.500" stroke="#c08838" stroke-width="3" stroke-linecap="round"/><path d="M20 1l-2.500 13" stroke="#e8cc98" stroke-width="1"/><path d="M1.500 3.800h6.500l2.500-3h7.500l-1.200 11.500h-7l-2.500 2.800H0.500z" fill="#5cb4fc" stroke="#3c9cf0" stroke-width="0.800" stroke-linejoin="round"/><path d="M4 6h4l2.500-3h5l-0.800 7h-5l-2.500 3H3z" fill="#b4dcfc"/><path d="M10 13h7V9l8 7-8 7v-4h-7z" fill="#48a830" stroke="#207010" stroke-width="0.800"/></svg>
<svg class="a" style="left:867.6px;top:135.3px" width="8.50" height="5.00" viewBox="0 0 8.5 5" preserveAspectRatio="none"><path d="M0 0h8.500l-4.250 5z" fill="#000"/></svg>
<svg class="a" style="left:913.8px;top:135.3px" width="8.50" height="5.00" viewBox="0 0 8.5 5" preserveAspectRatio="none"><path d="M0 0h8.500l-4.250 5z" fill="#000"/></svg>
<svg class="a" style="left:993.5px;top:135.3px" width="8.50" height="5.00" viewBox="0 0 8.5 5" preserveAspectRatio="none"><path d="M0 0h8.500l-4.250 5z" fill="#000"/></svg>
<div class="a sk2" style="left:1070px;top:124px;width:29px;height:28px;background:#fff;"></div>
<span class="t" style="top:130.97px;font:18px/1 'Liberation Serif',serif;color:#000;left:1082.00px;letter-spacing:0px;">I</span>
<div class="a sk2" style="left:1109px;top:124px;width:29px;height:28px;background:#fff;"></div>
<span class="t" style="top:130.97px;font:18px/1 'Liberation Serif',serif;color:#000;left:1117.50px;letter-spacing:0px;">O</span>
<div class="a sk2" style="left:1148px;top:124px;width:29px;height:28px;background:#fff;"></div>
<span class="t" style="top:130.97px;font:18px/1 'Liberation Serif',serif;color:#000;left:1152.20px;letter-spacing:-0.8px;">I/O</span>
<div class="a sk2" style="left:1187px;top:124px;width:29px;height:28px;background:#fff;"></div>
<div class="a" style="left:1194.5px;top:131px;width:17.5px;height:17.5px;border:1.7px solid #000;"></div>
<span class="t" style="top:130.97px;font:18px/1 'Liberation Serif',serif;color:#000;left:1201.00px;">i</span>
<div class="a rs" style="left:1226px;top:124px;width:30px;height:29px;background:#f0f0f0;"></div>
<span class="t" style="top:133.87px;font:bold 13.5px/1 'Liberation Sans',sans-serif;color:#000;letter-spacing:-1.748px;left:1231.00px;text-shadow:0.7px 0 #000;">ALL</span>
<svg class="a" style="left:1264.6px;top:126.6px" width="25.00" height="24.00" viewBox="0 0 25 24" preserveAspectRatio="none"><path d="M1 8l7-7 5 5-7 7z" fill="#e0b0e8"/><rect x="13" y="10" width="11" height="12" fill="#b0e0c0"/><path d="M4 21l11-11" stroke="#2860f0" stroke-width="7" stroke-linecap="round"/><path d="M4 21l6-6" stroke="#6090ff" stroke-width="2" stroke-linecap="round"/><path d="M14 10l4-4M17 2l-2 3 2 3 3 1 3-2M17 2l3-1" stroke="#808890" stroke-width="2.600" fill="none"/></svg>
<div class="a sk2" style="left:1325px;top:124px;width:29px;height:28px;background:#fff;"></div>
<svg class="a" style="left:1334px;top:130px" width="14.00" height="18.00" viewBox="0 0 14 18" preserveAspectRatio="none"><path d="M1 0l10 8-4 1 6 8-1.500 1-6-8-3 3z" fill="url(#p8)"/><path d="M1 0l10 8M1 0l1.500 13M7 9l6 8" fill="none" stroke="#000" stroke-width="0.8" /></svg>
<div class="a rs" style="left:1364px;top:124px;width:30.5px;height:29px;background:#f0f0f0;"></div>
<svg class="a" style="left:1369px;top:127px" width="22.00" height="22.00" viewBox="0 0 22 22" preserveAspectRatio="none"><path d="M1 8V1h8" fill="none" stroke="#000" stroke-width="1.5" stroke-dasharray="1.500 1.500" /><path d="M5 6l3-2 3 2 3-2 2 3-2 3 2 3-3 2-3-2-3 2-2-3 2-3z" fill="none" stroke="#000" stroke-width="2.200" stroke-dasharray="1.500 1"/><path d="M14 14l2-2 6 6-2 2z" fill="url(#p8)"/><path d="M16 21h5" fill="none" stroke="#000" stroke-width="1.5" stroke-dasharray="1.500 1.500" /></svg>
<div class="a rs" style="left:1481px;top:124px;width:30.5px;height:29px;background:#f0f0f0;"></div>
<svg class="a" style="left:1485px;top:128px" width="24.00" height="22.00" viewBox="0 0 24 22" preserveAspectRatio="none"><path d="M2 2h6l3 3v14h11" fill="none" stroke="#000" stroke-width="1.6" stroke-dasharray="1.500 1.500" /><path d="M3 6l2.500 2.500-2.500 2.500-2.500-2.500zM19 10l2.500 2.500-2.500 2.500-2.500-2.500z" fill="none" stroke="#000" stroke-width="1.1" /><path d="M0 16h6M20 5v1.500" fill="none" stroke="#000" stroke-width="1.6" stroke-dasharray="1.500 1.500" /></svg>
<svg class="a" style="left:1523.3px;top:127.8px" width="1.40" height="22.60" viewBox="0 0 1.4 22.60000000000001" preserveAspectRatio="none"><path d="M0.700 0V22.60000000000001" fill="none" stroke="#202020" stroke-width="1.4" stroke-dasharray="1.5 1.5" /></svg>
<svg class="a" style="left:1536px;top:126px" width="24.00" height="24.00" viewBox="0 0 24 24" preserveAspectRatio="none"><rect x="1" y="0" width="12" height="24" fill="url(#p8)"/><circle cx="7" cy="5" r="4.500" fill="#f0f0f0"/><circle cx="7" cy="5" r="4.500" fill="url(#p15)"/><path d="M4 10l3 2 3-2 1 2-4 2-4-2z" fill="#f0f020"/><circle cx="7" cy="17" r="1.200" fill="#40f040"/><circle cx="7" cy="22" r="1.200" fill="#40f040"/><path d="M15 8l3-3 5 6-5 6-3-3" fill="none" stroke="#000" stroke-width="1.2" /><path d="M15 8l-1 1M23 11l1 0" stroke="#60b0ff" stroke-width="1"/></svg>
<svg class="a" style="left:1596.8px;top:123.4px" width="22.00" height="24.10" viewBox="0 0 22 24" preserveAspectRatio="none"><path d="M10 0v17" fill="none" stroke="#e8c020" stroke-width="1.8" stroke-dasharray="1.500 1" /><path d="M3 17h14l4 3.500-4 3.500H3l-3-3.500z" fill="none" stroke="#e8c020" stroke-width="1.800" stroke-dasharray="1.500 1"/><path d="M3 21h15" fill="none" stroke="#c09020" stroke-width="1.4" stroke-dasharray="1.500 1" /><path d="M10 6h10" fill="none" stroke="#e8c020" stroke-width="1.6" stroke-dasharray="1.500 1" /><path d="M16 2l4 4-4 4" fill="none" stroke="#e8c020" stroke-width="1.5" stroke-dasharray="1.500 1" /></svg>
<svg class="a" style="left:1629px;top:123.4px" width="22.00" height="24.10" viewBox="0 0 22 24" preserveAspectRatio="none"><path d="M10 0v17" fill="none" stroke="#e8c020" stroke-width="1.8" stroke-dasharray="1.500 1" /><path d="M3 17h14l4 3.500-4 3.500H3l-3-3.500z" fill="none" stroke="#e8c020" stroke-width="1.800" stroke-dasharray="1.500 1"/><path d="M3 21h15" fill="none" stroke="#c09020" stroke-width="1.4" stroke-dasharray="1.500 1" /><path d="M10 5h11" fill="none" stroke="#e8c020" stroke-width="1.6" stroke-dasharray="1.500 1.500" /></svg>
<svg class="a" style="left:1662.6px;top:125px" width="24.40" height="21.00" viewBox="0 0 24 21" preserveAspectRatio="none"><path d="M0 1h6l2 2v17h16" fill="none" stroke="#30a050" stroke-width="1.8" stroke-dasharray="1.500 1.500" /><path d="M11 9l5-4v8z" fill="#7040e0"/><path d="M16 9l2-1.500 2 3 2-3 2 1.500" fill="none" stroke="#7040e0" stroke-width="1.4" /></svg>
<svg class="a" style="left:1696px;top:125px" width="22.70" height="21.00" viewBox="0 0 24 21" preserveAspectRatio="none"><path d="M0 20h13l2-2V1h8" fill="none" stroke="#30a050" stroke-width="1.8" stroke-dasharray="1.500 1.500" /><path d="M12 10l-5-4v8z" fill="#7040e0"/><path d="M7 10l-2 1.500-2-3-2 3" fill="none" stroke="#7040e0" stroke-width="1.4" /></svg>
<svg class="a" style="left:1729px;top:125px" width="24.00" height="21.00" viewBox="0 0 24 21" preserveAspectRatio="none"><path d="M0 1h7l2 2v17h15" fill="none" stroke="#30a050" stroke-width="1.8" stroke-dasharray="1.500 1.500" /><path d="M5 8h8l-4 4z" fill="#7040e0"/><path d="M13 12.0l2.500 2.500-2.500 2.500-2.500-2.500z" fill="#7040e0"/><path d="M16 14.500h4" fill="none" stroke="#7040e0" stroke-width="1.5" stroke-dasharray="1.500 1.500" /></svg>
<svg class="a" style="left:1761.8px;top:125px" width="24.00" height="21.00" viewBox="0 0 24 21" preserveAspectRatio="none"><path d="M0 1h13v17l2 2h9" fill="none" stroke="#30a050" stroke-width="1.8" stroke-dasharray="1.500 1.500" /><path d="M13 6.0l2.500 2.500-2.500 2.500-2.500-2.500z" fill="#7040e0"/><path d="M8 13.5l2.500 2.500-2.500 2.500-2.500-2.500z" fill="#7040e0"/><path d="M2 16h4" fill="none" stroke="#7040e0" stroke-width="1.5" stroke-dasharray="1.500 1.500" /></svg>
<svg class="a" style="left:1796px;top:125px" width="22.00" height="21.00" viewBox="0 0 24 21" preserveAspectRatio="none"><path d="M0 20h6l2-2V1h14" fill="none" stroke="#30a050" stroke-width="1.8" stroke-dasharray="1.500 1.500" /><path d="M8 6.0l2.500 2.500-2.500 2.500-2.500-2.500z" fill="#7040e0"/><path d="M13 13.5l2.500 2.500-2.500 2.500-2.500-2.500z" fill="#7040e0"/><path d="M16 16h4" fill="none" stroke="#7040e0" stroke-width="1.5" stroke-dasharray="1.500 1.500" /></svg>
<svg class="a" style="left:1829px;top:125px" width="21.70" height="21.00" viewBox="0 0 24 21" preserveAspectRatio="none"><path d="M0 20h12l2-2V1h8" fill="none" stroke="#30a050" stroke-width="1.8" stroke-dasharray="1.500 1.500" /><path d="M14 6.0l2.500 2.500-2.500 2.500-2.500-2.500z" fill="#7040e0"/><path d="M9 13.5l2.500 2.500-2.500 2.500-2.500-2.500z" fill="#7040e0"/><path d="M3 16h4" fill="none" stroke="#7040e0" stroke-width="1.5" stroke-dasharray="1.500 1.500" /></svg>
<svg class="a" style="left:24px;top:173px" width="23.00" height="21.50" viewBox="0 0 24 22" preserveAspectRatio="none"><path d="M1 1l2-1 7 7-7 5-2-1M1 16l2 2 7-6M1 20l2-1" fill="none" stroke="#000" stroke-width="1.3" /><path d="M10 11h13" fill="none" stroke="#3080ff" stroke-width="1.6" stroke-dasharray="1.500 1" /><path d="M10 11l5-4v8z" fill="url(#p16)"/></svg>
<svg class="a" style="left:54.7px;top:183px" width="6.00" height="4.00" viewBox="0 0 6 4" preserveAspectRatio="none"><path d="M0.500 0.500l2.500 2.500 2.500-2.500" fill="none" stroke="#303030" stroke-width="1.3" /></svg>
<svg class="a" style="left:70px;top:173px" width="23.30" height="21.50" viewBox="0 0 24 22" preserveAspectRatio="none"><path d="M23 1l-2-1-7 7 7 5 2-1M23 16l-2 2-7-6M23 20l-2-1" fill="none" stroke="#000" stroke-width="1.3" /><path d="M1 11h12" fill="none" stroke="#3050ff" stroke-width="1.6" stroke-dasharray="1.500 1" /><path d="M14 11l-5-4v8z" fill="url(#p17)"/></svg>
<svg class="a" style="left:101.6px;top:183px" width="6.00" height="4.00" viewBox="0 0 6 4" preserveAspectRatio="none"><path d="M0.500 0.500l2.500 2.500 2.500-2.500" fill="none" stroke="#303030" stroke-width="1.3" /></svg>
<svg class="a" style="left:116.7px;top:173px" width="25.00" height="22.90" viewBox="0 0 25 22" preserveAspectRatio="none"><path d="M0 2h5M0 11h5M0 20h5" fill="none" stroke="#000" stroke-width="1.5" stroke-dasharray="1.500 1.500" /><path d="M5 0l2 2-2 2M5 9l2 2-2 2M5 18l2 2-2 2" fill="none" stroke="#000" stroke-width="1.1" /><path d="M13 4l7 7-7 7-7-7z" fill="none" stroke="#000" stroke-width="1.200"/><path d="M13 6v10M8 11h10" stroke="#30e030" stroke-width="2"/><path d="M23 9l2 2-2 2-2-2z" fill="#3050ff"/></svg>
<svg class="a" style="left:153.20000000000002px;top:173px" width="1.40" height="23.00" viewBox="0 0 1.4 23" preserveAspectRatio="none"><path d="M0.700 0V23" fill="none" stroke="#202020" stroke-width="1.4" stroke-dasharray="1.5 1.5" /></svg>
<span class="t" style="top:176.66px;font:16px/1 'Liberation Sans',sans-serif;color:#a0a0a0;letter-spacing:-0.020px;left:170.30px;text-shadow:1px 1px #fff;">Search:</span>
<div class="a sk2" style="left:234px;top:171.5px;width:173px;height:27.5px;background:#f0f0f0;"></div>
<div class="a rs" style="left:411px;top:171.5px;width:26px;height:25.5px;background:#f0f0f0;"></div>
<svg class="a" style="left:416.8px;top:181.7px" width="17.50" height="9.80" viewBox="0 0 17.5 10" preserveAspectRatio="none"><path d="M0 0h17.500L8.750 10z" fill="url(#p8)"/></svg>
<svg class="a" style="left:444px;top:173.2px" width="24.50" height="23.40" viewBox="0 0 27 23" preserveAspectRatio="none"><g transform="translate(3,0)"><path d="M6 0h4v3h4V0h4l5 11v7h-8v-7h-2v7H2v-7z" fill="url(#p18)"/></g><path d="M0 19l4-4v3h5v2H4v3z" fill="url(#p19)"/><path d="M0 19l4-4M0 19l4 4" fill="none" stroke="#2030ff" stroke-width="1.3" stroke-dasharray="1.500 1" /></svg>
<svg class="a" style="left:474px;top:173.2px" width="24.40" height="23.40" viewBox="0 0 24 23" preserveAspectRatio="none"><path d="M6 0h4v3h4V0h4l5 11v7h-8v-7h-2v7H2v-7z" fill="url(#p18)"/><path d="M24 19l-4-4v3h-5v2h5v3z" fill="url(#p19)"/><path d="M24 19l-4-4M24 19l-4 4" fill="none" stroke="#2030ff" stroke-width="1.3" stroke-dasharray="1.500 1" /></svg>
<svg class="a" style="left:511.6px;top:173.2px" width="24.00" height="23.40" viewBox="0 0 23 24" preserveAspectRatio="none"><path d="M4 0h4v3h4V0h4l4 9v5h-7V9h-2v7H0V9z" fill="url(#p18)"/><path d="M6 20l9-9 5 4-9 9z" fill="url(#p20)"/><path d="M18 8l5 4-3 3-5-4z" fill="url(#p21)"/></svg>
<svg class="a" style="left:575.7px;top:171px" width="23.30" height="25.00" viewBox="0 0 24 25" preserveAspectRatio="none"><path d="M8.500 1l5 2.500 2.500 5-2.500 5-5 2.500-5-2.500-2.500-5 2.500-5z" fill="none" stroke="#000" stroke-width="1.6" stroke-dasharray="2.500 1.500" /><path d="M15 15l8 8M23 23l-3 1" fill="none" stroke="#2030d0" stroke-width="1.5" /><path d="M5 8.500h7M8.500 5v7M6 6l5 5" fill="none" stroke="#505050" stroke-width="1.1" /></svg>
<svg class="a" style="left:608.8px;top:171px" width="23.20" height="25.00" viewBox="0 0 24 25" preserveAspectRatio="none"><path d="M8.500 1l5 2.500 2.500 5-2.500 5-5 2.500-5-2.500-2.500-5 2.500-5z" fill="none" stroke="#000" stroke-width="1.6" stroke-dasharray="2.500 1.500" /><path d="M15 15l8 8M23 23l-3 1" fill="none" stroke="#2030d0" stroke-width="1.5" /><path d="M4 9l1.500-1.500 1.500 1.500 1.500-1.500 1.500 1.500 1.500-1.500 1.500 1.500" fill="none" stroke="#404040" stroke-width="1.1" /></svg>
<svg class="a" style="left:642px;top:171px" width="23.00" height="25.00" viewBox="0 0 24 25" preserveAspectRatio="none"><path d="M8.500 1l5 2.500 2.500 5-2.500 5-5 2.500-5-2.500-2.500-5 2.500-5z" fill="#4878b8"/><path d="M8.500 1l5 2.500 2.500 5-2.500 5-5 2.500-5-2.500-2.500-5 2.500-5z" fill="url(#p22)"/><path d="M8.500 1l5 2.500 2.500 5-2.500 5-5 2.500-5-2.500-2.500-5 2.500-5z" fill="none" stroke="#000" stroke-width="1.6" stroke-dasharray="2.500 1.500" /><path d="M15 15l8 8M23 23l-3 1" fill="none" stroke="#2030d0" stroke-width="1.5" /><path d="M3 5l3-3" fill="none" stroke="#fff" stroke-width="1.5" /></svg>
<svg class="a" style="left:673.9px;top:171px" width="24.10" height="25.00" viewBox="0 0 24 25" preserveAspectRatio="none"><path d="M8 1v15" fill="none" stroke="#e8c020" stroke-width="1.8" stroke-dasharray="1.500 1" /><path d="M3 16h12l3 3.500-3 3.500H3l-3-3.500z" fill="none" stroke="#e8c020" stroke-width="1.800" stroke-dasharray="1.500 1"/><path d="M3 23h12" fill="none" stroke="#b88020" stroke-width="1.5" stroke-dasharray="1.500 1" /><path d="M16 0l5 4-5 5-5-4z" fill="#d0d0d0" stroke="#606060" stroke-width="0.800" stroke-dasharray="1.500 1"/><path d="M20 6q3 2 2 6" fill="none" stroke="#2030ff" stroke-width="1.6" stroke-dasharray="1.500 1.500" /></svg>
<svg class="a" style="left:707px;top:171px" width="24.00" height="25.00" viewBox="0 0 24 25" preserveAspectRatio="none"><path d="M5 6v11M18 6v11" fill="none" stroke="#e8c020" stroke-width="1.8" stroke-dasharray="1.500 1" /><path d="M3 17h6l2 3-2 3H3l-3-3z" fill="none" stroke="#e8c020" stroke-width="1.800" stroke-dasharray="1.500 1"/><path d="M15 17h6l2 3-2 3h-6l-3-3z" fill="none" stroke="#e8c020" stroke-width="1.800" stroke-dasharray="1.500 1"/><path d="M3 23h6M15 23h6" fill="none" stroke="#b88020" stroke-width="1.5" stroke-dasharray="1.500 1" /><g transform="translate(1,0)"><path d="M16 0l5 4-5 5-5-4z" fill="#d0d0d0" stroke="#606060" stroke-width="0.800" stroke-dasharray="1.500 1"/><path d="M20 6q3 2 2 6" fill="none" stroke="#2030ff" stroke-width="1.6" stroke-dasharray="1.500 1.500" /></g></svg>
<svg class="a" style="left:739.5px;top:171px" width="25.00" height="25.00" viewBox="0 0 25 25" preserveAspectRatio="none"><path d="M1 1h10v3h-7v3h4v9H1z" fill="none" stroke="#2020c0" stroke-width="1.800" stroke-dasharray="1.500 1"/><path d="M1 16h10" fill="none" stroke="#2020c0" stroke-width="1.6" stroke-dasharray="1.500 1.500" /><path d="M14 8l6 5-5 5-6-5z" fill="#d0d0d0" stroke="#404040" stroke-width="1" stroke-dasharray="1.500 1"/><path d="M18 17l2-2 5 6-2 2z" fill="url(#p19)"/><path d="M18 17l5 6" fill="none" stroke="#2030ff" stroke-width="1.2" /></svg>
<div class="a sk2" style="left:800px;top:171.5px;width:29px;height:28.5px;background:#fff;"></div>
<svg class="a" style="left:805px;top:172px" width="22.00" height="26.50" viewBox="0 0 22 26.5" preserveAspectRatio="none"><path d="M8 6v19" fill="none" stroke="#208838" stroke-width="1.6" stroke-dasharray="1.500 1.500" /><path d="M0 25.500h21" fill="none" stroke="#208838" stroke-width="1.6" stroke-dasharray="1.500 1.500" /></svg>
<div class="a rs" style="left:838.5px;top:171.5px;width:30.5px;height:28.5px;background:#f0f0f0;"></div>
<svg class="a" style="left:842px;top:172.5px" width="22.00" height="26.00" viewBox="0 0 22 26" preserveAspectRatio="none"><rect x="6" y="1" width="12" height="24" fill="url(#p23)"/><path d="M11 2v22M14 2v22" fill="none" stroke="#208838" stroke-width="1.5" stroke-dasharray="1.500 1.500" /><path d="M0 23h22" fill="none" stroke="#208838" stroke-width="1.6" stroke-dasharray="1.500 1.500" /></svg>
<div class="a rs" style="left:877.5px;top:171.5px;width:30.5px;height:28.5px;background:#f0f0f0;"></div>
<svg class="a" style="left:881px;top:172.5px" width="23.00" height="26.00" viewBox="0 0 23 26" preserveAspectRatio="none"><rect x="1" y="1" width="21" height="24" fill="#f0f0f0"/><rect x="1" y="1" width="21" height="24" fill="url(#p24)"/><rect x="1" y="1" width="21" height="24" fill="#308848" opacity="0.450"/></svg>
<svg class="a" style="left:920.0999999999999px;top:175.4px" width="1.40" height="23.40" viewBox="0 0 1.4 23.400000000000006" preserveAspectRatio="none"><path d="M0.700 0V23.400000000000006" fill="none" stroke="#202020" stroke-width="1.4" stroke-dasharray="1.5 1.5" /></svg>
<svg class="a" style="left:933px;top:174px" width="25.00" height="25.00" viewBox="0 0 25 25" preserveAspectRatio="none"><rect x="0" y="0" width="25" height="25" fill="#f0f0f0"/><rect x="0" y="0" width="25" height="25" fill="url(#p23)"/><rect x="0" y="0" width="25" height="25" fill="#4040a0" opacity="0.400"/><path d="M11.500 2v22M12 1h12" fill="none" stroke="#208838" stroke-width="1.6" stroke-dasharray="1.500 1.500" /></svg>
<svg class="a" style="left:968px;top:174px" width="22.00" height="25.00" viewBox="0 0 22 24" preserveAspectRatio="none"><rect x="7" y="0" width="8" height="24" fill="url(#p23)"/><path d="M7 0v23" fill="none" stroke="#f0f020" stroke-width="1.8" stroke-dasharray="1.500 1.500" /><path d="M11 2v20M12 1.500h10M0 22.500h5" fill="none" stroke="#208838" stroke-width="1.6" stroke-dasharray="1.500 1.500" /></svg>
<svg class="a" style="left:1001px;top:174px" width="22.00" height="25.00" viewBox="0 0 22 24" preserveAspectRatio="none"><path d="M0 22.500h9l2-2V1.500h11" fill="none" stroke="#208838" stroke-width="1.7" stroke-dasharray="1.500 1.500" /></svg>
<svg class="a" style="left:1033.9px;top:174px" width="22.00" height="25.00" viewBox="0 0 22 24" preserveAspectRatio="none"><path d="M0 22.500h9M11 1.500h11" fill="none" stroke="#208838" stroke-width="1.7" stroke-dasharray="1.500 1.500" /><path d="M10 1v22" fill="none" stroke="#f0f020" stroke-width="1.9" stroke-dasharray="1.500 1.500" /></svg>
<svg class="a" style="left:1094px;top:173px" width="22.00" height="22.00" viewBox="0 0 22 22" preserveAspectRatio="none"><path d="M1 0l12 21M13 0L1 21" fill="none" stroke="#a02020" stroke-width="1.5" stroke-dasharray="4 1.500" /><path d="M22 5l-8 6 8 6z" fill="url(#p7)"/></svg>
<svg class="a" style="left:1125px;top:173px" width="22.00" height="22.00" viewBox="0 0 22 22" preserveAspectRatio="none"><g transform="translate(9,0)"><path d="M1 0l12 21M13 0L1 21" fill="none" stroke="#a02020" stroke-width="1.5" stroke-dasharray="4 1.500" /></g><path d="M0 5l8 6-8 6z" fill="url(#p7)"/></svg>
<div class="a rs" style="left:1158.5px;top:171.5px;width:30.5px;height:29.5px;background:#f0f0f0;"></div>
<svg class="a" style="left:1165px;top:176px" width="18.00" height="21.00" viewBox="0 0 18 21" preserveAspectRatio="none"><path d="M1 1h10l6 6v14l-3-3-3 3-3-3-3 3-4-3z" fill="url(#p1)"/><path d="M1 1h10l6 6v14M1 1v19" fill="none" stroke="#000" stroke-width="1.4" stroke-dasharray="1.500 1.500" /><circle cx="6" cy="10" r="1.300" fill="#f02020"/><circle cx="12" cy="10" r="1.300" fill="#f02020"/><path d="M7 15l2 1.500 2-1.500" stroke="#f02020" stroke-width="1.300" fill="none"/></svg>
<svg class="a" style="left:1203px;top:175px" width="20.00" height="24.00" viewBox="0 0 20 24" preserveAspectRatio="none"><path d="M0 2l14 12M14 0L1 15" fill="none" stroke="#a02020" stroke-width="1.5" /><path d="M15 1L2 16" fill="none" stroke="#808080" stroke-width="1" /><path d="M11 10l8 7-4 7-8-8z" fill="url(#p25)"/><path d="M11 10l8 7-4 7-8-8z" fill="url(#p1)"/></svg>
<div class="a" style="left:1407px;top:126px;width:60px;height:29px;background:#ffffe1;border-top:1.5px solid #000;border-bottom:1.5px solid #000;"></div>
<span class="t" style="top:133.21px;font:17px/1 'Liberation Sans',sans-serif;color:#000;letter-spacing:-0.683px;left:1408.00px;">Run -All</span>
<div class="a" style="left:1373.5px;top:66px;width:41px;height:55px;border:4.5px solid #ed1c24;"></div>
<div class="a" style="left:1402px;top:120px;width:70px;height:40px;border:5px solid #ed1c24;"></div>
<div class="a" style="left:0px;top:210px;width:1234px;height:1px;background:#c4c4c4;"></div>
<div class="a" style="left:0px;top:211px;width:1920px;height:1.3px;background:#fff;"></div>
<div class="a" style="left:0px;top:212.3px;width:1920px;height:614px;background:#cccccc;"></div>
<div class="a" style="left:0px;top:66px;width:1px;height:942px;background:#808080;"></div>
<div class="a" style="left:0px;top:212.5px;width:355.6px;height:602.5px;background:#b0b0b0;"></div><div class="a" style="left:0px;top:213.5px;width:354.6px;height:601.5px;background:#fff;"></div><div class="a" style="left:1px;top:214.8px;width:352.6px;height:599.2px;background:#f0f0f0;"></div>
<div class="a" style="left:355.6px;top:213.5px;width:1.5px;height:601.5px;background:#fff;"></div>
<div class="a" style="left:324px;top:781px;width:31px;height:34px;background:#cccccc;"></div>
<svg class="a" style="left:4px;top:216px;" width="26" height="26" viewBox="0 0 26 26"><path d="M9.300 1.400H19.800L24 5.500V9L22.500 10.500V13.500L20.500 15V19.200H10.900L5.500 15V12.500L7 11V7L8.500 3.500z" fill="#f8fbff" stroke="#000" stroke-width="1.700" stroke-linejoin="round"/>
<path d="M12.800 4.300h6.700M11.200 7.300h7M11.200 10.300h7M9.600 13.300h7M10 16.300h6.300" stroke="#282880" stroke-width="1.300" stroke-dasharray="3 0.800"/>
<path d="M2 1.200h4M2 4.300h4M0.400 7.300h4.100M0.400 10.300h2.600M0.400 13.300h2.600" stroke="#8c8cd0" stroke-width="1.100"/>
<path d="M5.500 14.300l5 5-5 5-5-5z" fill="#dc1030" stroke="#000" stroke-width="1.700" stroke-linejoin="round"/><circle cx="5.500" cy="19.300" r="0.900" fill="#300008"/>
<path d="M20.600 17.400l3.700 3.700-3.700 3.700-3.700-3.700z" fill="#dc1030" stroke="#000" stroke-width="1.700" stroke-linejoin="round"/></svg>
<span class="t" style="top:221.96px;font:16px/1 'Liberation Sans',sans-serif;color:#000;letter-spacing:0.092px;left:33.50px;">sim - Default</span>
<div class="a" style="left:132px;top:223px;width:56px;height:4.3px;background:linear-gradient(#fff 0,#fff 2px,#8a8a8a 2px,#8a8a8a 3.8px,transparent 3.8px);border-right:1px solid #8a8a8a;"></div><div class="a" style="left:132px;top:230.5px;width:56px;height:4.3px;background:linear-gradient(#fff 0,#fff 2px,#8a8a8a 2px,#8a8a8a 3.8px,transparent 3.8px);border-right:1px solid #8a8a8a;"></div><div class="a" style="left:220px;top:223px;width:55px;height:4.3px;background:linear-gradient(#fff 0,#fff 2px,#8a8a8a 2px,#8a8a8a 3.8px,transparent 3.8px);border-right:1px solid #8a8a8a;"></div><div class="a" style="left:220px;top:230.5px;width:55px;height:4.3px;background:linear-gradient(#fff 0,#fff 2px,#8a8a8a 2px,#8a8a8a 3.8px,transparent 3.8px);border-right:1px solid #8a8a8a;"></div><svg class="a" style="left:191px;top:222px;" width="28" height="14" viewBox="0 0 28 14"><rect width="28" height="14" fill="#f8f8f8"/><rect x="1.5" y="2.0" width="1.6" height="1.6" fill="#303030"/><rect x="6.0" y="2.0" width="1.6" height="1.6" fill="#303030"/><rect x="10.5" y="2.0" width="1.6" height="1.6" fill="#303030"/><rect x="15.0" y="2.0" width="1.6" height="1.6" fill="#303030"/><rect x="19.5" y="2.0" width="1.6" height="1.6" fill="#303030"/><rect x="24.0" y="2.0" width="1.6" height="1.6" fill="#303030"/><rect x="3.0" y="6.4" width="1.6" height="1.6" fill="#303030"/><rect x="7.5" y="6.4" width="1.6" height="1.6" fill="#303030"/><rect x="12.0" y="6.4" width="1.6" height="1.6" fill="#303030"/><rect x="16.5" y="6.4" width="1.6" height="1.6" fill="#303030"/><rect x="21.0" y="6.4" width="1.6" height="1.6" fill="#303030"/><rect x="25.5" y="6.4" width="1.6" height="1.6" fill="#303030"/><rect x="1.5" y="10.8" width="1.6" height="1.6" fill="#303030"/><rect x="6.0" y="10.8" width="1.6" height="1.6" fill="#303030"/><rect x="10.5" y="10.8" width="1.6" height="1.6" fill="#303030"/><rect x="15.0" y="10.8" width="1.6" height="1.6" fill="#303030"/><rect x="19.5" y="10.8" width="1.6" height="1.6" fill="#303030"/><rect x="24.0" y="10.8" width="1.6" height="1.6" fill="#303030"/></svg>
<div class="a rs" style="left:282px;top:218px;width:18px;height:20px;"></div><svg class="a" style="left:282px;top:218px;" width="18" height="20" viewBox="0 0 18 20"><path d="M8.5 4v11M3.0 9.5h11" stroke="#000" stroke-width="2.8" fill="none"/></svg><div class="a rs" style="left:306px;top:218px;width:18px;height:20px;"></div><svg class="a" style="left:306px;top:218px;" width="18" height="20" viewBox="0 0 18 20"><rect x="4.5" y="9" width="6" height="6" fill="none" stroke="#000" stroke-width="1.6"/><path d="M7.5 12l6-6.5M9 4.8h5v5" stroke="#000" stroke-width="1.8" fill="none"/></svg><div class="a rs" style="left:330px;top:218px;width:21px;height:20px;"></div><svg class="a" style="left:330px;top:218px;" width="21" height="20" viewBox="0 0 21 20"><path d="M5.0 4.5l10 10M15.0 4.5l-10 10" stroke="#000" stroke-width="2.2" fill="none"/></svg>
<div class="a" style="left:3px;top:244px;width:351px;height:507px;background:#fff;border-left:1px solid #696969;"></div>
<div class="a hd" style="left:4px;top:244px;width:18px;height:24px;"></div>
<svg class="a" style="left:0;top:0" width="1" height="1"><path d="M8 254.0L13 259.0L18 254.0Z" fill="#404040"/></svg>
<div class="a hd" style="left:22px;top:244px;width:202px;height:24px;"></div><span class="t" style="top:249.96px;font:16px/1 'Liberation Sans',sans-serif;color:#000;letter-spacing:0.189px;left:25.50px;">Instance</span>
<div class="a hd" style="left:224px;top:244px;width:107px;height:24px;"></div><span class="t" style="top:249.96px;font:16px/1 'Liberation Sans',sans-serif;color:#000;letter-spacing:-0.004px;left:227.00px;">Design unit</span>
<div class="a hd" style="left:331px;top:244px;width:22px;height:24px;overflow:hidden;"><span class="t" style="top:5.96px;font:16px/1 'Liberation Sans',sans-serif;color:#000;left:2.50px;">Design unit type</span></div>
<div class="a" style="left:4px;top:268px;width:349px;height:1px;background:#696969;"></div>
<div class="a" style="left:4px;top:274px;width:349px;height:22px;background:#c0cedc;"></div>
<span class="t" style="top:277.46px;font:16px/1 'Liberation Sans',sans-serif;color:#000;letter-spacing:0.040px;left:65.00px;">circuito</span>
<span class="t" style="top:277.46px;font:16px/1 'Liberation Sans',sans-serif;color:#000;letter-spacing:0.213px;left:227.00px;">circuito(main)</span>
<div class="a" style="left:331px;top:274px;width:22px;height:22px;overflow:hidden;"><span class="t" style="top:3.46px;font:16px/1 'Liberation Sans',sans-serif;color:#000;left:2.00px;">Architecture</span></div>
<svg class="a" style="left:37px;top:276px;" width="19" height="19" viewBox="0 0 19 19"><rect x="0.5" y="0.5" width="18" height="18" fill="#2838b0"/>
<path d="M0.5 0.5h18l-5 5h-8v8l-5 5z" fill="#5078f0"/>
<rect x="5" y="5" width="9" height="9" fill="#1040e8"/>
<path d="M18.5 0.5l-3 3M0.5 18.5l3-3" stroke="#000" stroke-width="1.2"/></svg>
<span class="t" style="top:301.46px;font:16px/1 'Liberation Sans',sans-serif;color:#000;letter-spacing:-0.063px;left:90.00px;">line__19</span>
<span class="t" style="top:301.46px;font:16px/1 'Liberation Sans',sans-serif;color:#000;letter-spacing:0.213px;left:227.00px;">circuito(main)</span>
<div class="a" style="left:331px;top:298px;width:22px;height:22px;overflow:hidden;"><span class="t" style="top:3.46px;font:16px/1 'Liberation Sans',sans-serif;color:#000;left:2.00px;">Process</span></div>
<svg class="a" style="left:63px;top:298px;" width="20" height="20" viewBox="0 0 20 20"><circle cx="10" cy="10" r="9.5" fill="#2028b0"/><circle cx="9" cy="8.500" r="7.5" fill="#1838e0"/>
<circle cx="6" cy="6" r="2.2" fill="#fff"/></svg>
<span class="t" style="top:325.46px;font:16px/1 'Liberation Sans',sans-serif;color:#000;letter-spacing:0.217px;left:65.00px;">standard</span>
<span class="t" style="top:325.46px;font:16px/1 'Liberation Sans',sans-serif;color:#000;letter-spacing:0.217px;left:227.00px;">standard</span>
<div class="a" style="left:331px;top:322px;width:22px;height:22px;overflow:hidden;"><span class="t" style="top:3.46px;font:16px/1 'Liberation Sans',sans-serif;color:#000;left:2.00px;">Package</span></div>
<svg class="a" style="left:37px;top:324px;" width="19" height="19" viewBox="0 0 19 19"><rect x="0.5" y="0.5" width="18" height="18" fill="#2838b0"/>
<path d="M0.5 0.5h18l-5 5h-8v8l-5 5z" fill="#5078f0"/>
<rect x="5" y="5" width="9" height="9" fill="#1040e8"/>
<path d="M18.5 0.5l-3 3M0.5 18.5l3-3" stroke="#000" stroke-width="1.2"/></svg>
<span class="t" style="top:349.46px;font:16px/1 'Liberation Sans',sans-serif;color:#000;letter-spacing:0.460px;left:65.00px;">textio</span>
<span class="t" style="top:349.46px;font:16px/1 'Liberation Sans',sans-serif;color:#000;letter-spacing:0.460px;left:227.00px;">textio</span>
<div class="a" style="left:331px;top:346px;width:22px;height:22px;overflow:hidden;"><span class="t" style="top:3.46px;font:16px/1 'Liberation Sans',sans-serif;color:#000;left:2.00px;">Package</span></div>
<svg class="a" style="left:37px;top:348px;" width="19" height="19" viewBox="0 0 19 19"><rect x="0.5" y="0.5" width="18" height="18" fill="#2838b0"/>
<path d="M0.5 0.5h18l-5 5h-8v8l-5 5z" fill="#5078f0"/>
<rect x="5" y="5" width="9" height="9" fill="#1040e8"/>
<path d="M18.5 0.5l-3 3M0.5 18.5l3-3" stroke="#000" stroke-width="1.2"/></svg>
<span class="t" style="top:373.46px;font:16px/1 'Liberation Sans',sans-serif;color:#000;letter-spacing:0.182px;left:65.00px;">std_logic_1164</span>
<span class="t" style="top:373.46px;font:16px/1 'Liberation Sans',sans-serif;color:#000;letter-spacing:0.266px;left:227.00px;">std_logic_1...</span>
<div class="a" style="left:331px;top:370px;width:22px;height:22px;overflow:hidden;"><span class="t" style="top:3.46px;font:16px/1 'Liberation Sans',sans-serif;color:#000;left:2.00px;">Package</span></div>
<svg class="a" style="left:37px;top:372px;" width="19" height="19" viewBox="0 0 19 19"><rect x="0.5" y="0.5" width="18" height="18" fill="#2838b0"/>
<path d="M0.5 0.5h18l-5 5h-8v8l-5 5z" fill="#5078f0"/>
<rect x="5" y="5" width="9" height="9" fill="#1040e8"/>
<path d="M18.5 0.5l-3 3M0.5 18.5l3-3" stroke="#000" stroke-width="1.2"/></svg>
<div class="a" style="left:13px;top:279px;width:14px;height:14px;background:#fff;border:1px solid #d8d8d8;border-right-color:#a0a0a0;border-bottom-color:#a0a0a0;"><div class="a" style="left:2.5px;top:5.2px;width:7px;height:1.6px;background:#000"></div></div>
<div class="a" style="left:27px;top:286px;width:10px;height:1px;background:#808080;"></div>
<div class="a" style="left:46px;top:295px;width:1px;height:16px;background:#808080;"></div>
<div class="a" style="left:46px;top:310px;width:17px;height:1px;background:#808080;"></div>
<div class="a" style="left:3px;top:756px;width:351px;height:22px;background:#f8f8f8;"></div>
<div class="a rs" style="left:3px;top:756px;width:23px;height:22px;background:#f0f0f0;"></div>
<svg class="a" style="left:0;top:0" width="1" height="1"><path d="M16.5 762L11.5 767L16.5 772Z" fill="#000"/></svg>
<div class="a rs" style="left:28px;top:756px;width:82px;height:22px;background:#f0f0f0;"></div>
<div class="a rs" style="left:330px;top:756px;width:24px;height:22px;background:#f0f0f0;"></div>
<svg class="a" style="left:0;top:0" width="1" height="1"><path d="M340.5 762L345.5 767L340.5 772Z" fill="#000"/></svg>
<div class="a" style="left:1px;top:781.3px;width:323px;height:2.4px;background:#202020;"></div>
<div class="a" style="left:0px;top:781px;width:117px;height:33px;background:#cfcfcf;border:2px solid #181818;border-top-width:2.5px;border-radius:0 0 5px 5px;border-left-width:1.3px;border-right-width:1.5px;"></div>
<div class="a" style="left:117px;top:781px;width:88px;height:33px;background:#f0f0f0;border:2px solid #202020;border-left-width:1.5px;border-top:0;border-radius:0 0 5px 5px;"></div>
<div class="a" style="left:119px;top:781px;width:84px;height:3px;background:#f0f0f0;"></div>
<svg class="a" style="left:9px;top:783px;" width="24" height="24" viewBox="0 0 24 24"><path d="M0 22l4-7.200h16l4 7.200h-4.500l-1 1.200h-2l-1-1.200h-7l-1 1.200h-2l-1-1.200z" fill="#000"/>
<rect x="4.500" y="5.800" width="15" height="15.700" fill="#000"/><rect x="7.800" y="1" width="4.400" height="6" fill="#000"/><rect x="15.200" y="4.200" width="4.300" height="3" fill="#000"/>
<rect x="5.500" y="6.800" width="2.500" height="13.700" fill="#00d890"/>
<rect x="8.800" y="2" width="2.400" height="18.500" fill="#d4006c"/>
<rect x="11.800" y="8.400" width="3.200" height="12.100" fill="#38a8ff"/>
<rect x="16.200" y="5.200" width="2.300" height="15.300" fill="#e4e400"/></svg>
<span class="t" style="top:788.46px;font:16px/1 'Liberation Sans',sans-serif;color:#000;letter-spacing:0.084px;left:37.50px;">Library</span>
<svg class="a" style="left:123px;top:783px;" width="26" height="26" viewBox="0 0 26 26"><path d="M9.300 1.400H19.800L24 5.500V9L22.500 10.500V13.500L20.500 15V19.200H10.900L5.500 15V12.500L7 11V7L8.500 3.500z" fill="#f8fbff" stroke="#000" stroke-width="1.700" stroke-linejoin="round"/>
<path d="M12.800 4.300h6.700M11.200 7.300h7M11.200 10.300h7M9.600 13.300h7M10 16.300h6.300" stroke="#282880" stroke-width="1.300" stroke-dasharray="3 0.800"/>
<path d="M2 1.200h4M2 4.300h4M0.400 7.300h4.100M0.400 10.300h2.600M0.400 13.300h2.600" stroke="#8c8cd0" stroke-width="1.100"/>
<path d="M5.500 14.300l5 5-5 5-5-5z" fill="#dc1030" stroke="#000" stroke-width="1.700" stroke-linejoin="round"/><circle cx="5.500" cy="19.300" r="0.900" fill="#300008"/>
<path d="M20.600 17.400l3.700 3.700-3.700 3.700-3.700-3.700z" fill="#dc1030" stroke="#000" stroke-width="1.700" stroke-linejoin="round"/></svg>
<span class="t" style="top:788.46px;font:16px/1 'Liberation Sans',sans-serif;color:#000;letter-spacing:-0.961px;left:153.50px;">sim</span>
<svg class="a" style="left:97.5px;top:790px;" width="12" height="12" viewBox="0 0 12 12"><path d="M1.5 1.5l9 9M10.5 1.5l-9 9" stroke="#b8b8b8" stroke-width="2.6" fill="none"/></svg>
<svg class="a" style="left:186px;top:790px;" width="12" height="12" viewBox="0 0 12 12"><path d="M1.5 1.5l9 9M10.5 1.5l-9 9" stroke="#b8b8b8" stroke-width="2.6" fill="none"/></svg>
<div class="a rs" style="left:325px;top:782px;width:15px;height:24px;background:#f0f0f0;"></div>
<div class="a rs" style="left:341px;top:782px;width:16px;height:24px;background:#f0f0f0;"></div>
<svg class="a" style="left:325px;top:782px;" width="32" height="24" viewBox="0 0 32 24"><path d="M9.5 7l-4.5 5 4.5 5M7 12h3" stroke="#404040" stroke-width="1.2" fill="none"/><path d="M22 7l4.5 5-4.5 5M22 12h3" stroke="#404040" stroke-width="1.2" fill="none"/></svg>
<div class="a" style="left:366px;top:212.5px;width:471.4px;height:602.0px;background:#b0b0b0;"></div><div class="a" style="left:367px;top:213.5px;width:469.4px;height:601.0px;background:#fff;"></div><div class="a" style="left:369px;top:214.8px;width:466.4px;height:598.7px;background:#f0f0f0;"></div>
<div class="a" style="left:837.4px;top:213.5px;width:1.7px;height:601px;background:#fff;"></div>
<div class="a" style="left:369px;top:215px;width:467px;height:28px;background:#9cb6d6;"></div>
<svg class="a" style="left:371px;top:216px;" width="24" height="26" viewBox="0 0 24 26"><path d="M8 1l5 3.500-7 7.500-5-3.500z" fill="#b020d0"/>
<rect x="13" y="9" width="10" height="11" fill="#18a038"/>
<circle cx="14" cy="9" r="4.6" fill="#00e8f8"/>
<path d="M8 11l8 6.500-8 7.500-7.500-7.500z" fill="#0858e8"/></svg>
<span class="t" style="top:221.96px;font:16px/1 'Liberation Sans',sans-serif;color:#000;letter-spacing:0.108px;left:400.00px;">Objects</span>
<div class="a" style="left:463px;top:222.5px;width:130px;height:4.8px;background:linear-gradient(#c8ecfc 0,#c8ecfc 2px,#181818 2px,#181818 4.3px,transparent 4.3px);border-right:1px solid #181818;"></div><div class="a" style="left:463px;top:230.0px;width:130px;height:4.8px;background:linear-gradient(#c8ecfc 0,#c8ecfc 2px,#181818 2px,#181818 4.3px,transparent 4.3px);border-right:1px solid #181818;"></div><div class="a" style="left:625px;top:222.5px;width:133px;height:4.8px;background:linear-gradient(#c8ecfc 0,#c8ecfc 2px,#181818 2px,#181818 4.3px,transparent 4.3px);border-right:1px solid #181818;"></div><div class="a" style="left:625px;top:230.0px;width:133px;height:4.8px;background:linear-gradient(#c8ecfc 0,#c8ecfc 2px,#181818 2px,#181818 4.3px,transparent 4.3px);border-right:1px solid #181818;"></div><svg class="a" style="left:596px;top:221.5px;" width="28" height="14" viewBox="0 0 28 14"><rect x="2.3" y="2.8" width="1.6" height="1.6" fill="#202020"/><rect x="1.5" y="2.0" width="1.6" height="1.6" fill="#fff"/><rect x="6.8" y="2.8" width="1.6" height="1.6" fill="#202020"/><rect x="6.0" y="2.0" width="1.6" height="1.6" fill="#fff"/><rect x="11.3" y="2.8" width="1.6" height="1.6" fill="#202020"/><rect x="10.5" y="2.0" width="1.6" height="1.6" fill="#fff"/><rect x="15.8" y="2.8" width="1.6" height="1.6" fill="#202020"/><rect x="15.0" y="2.0" width="1.6" height="1.6" fill="#fff"/><rect x="20.3" y="2.8" width="1.6" height="1.6" fill="#202020"/><rect x="19.5" y="2.0" width="1.6" height="1.6" fill="#fff"/><rect x="24.8" y="2.8" width="1.6" height="1.6" fill="#202020"/><rect x="24.0" y="2.0" width="1.6" height="1.6" fill="#fff"/><rect x="3.8" y="7.2" width="1.6" height="1.6" fill="#202020"/><rect x="3.0" y="6.4" width="1.6" height="1.6" fill="#fff"/><rect x="8.3" y="7.2" width="1.6" height="1.6" fill="#202020"/><rect x="7.5" y="6.4" width="1.6" height="1.6" fill="#fff"/><rect x="12.8" y="7.2" width="1.6" height="1.6" fill="#202020"/><rect x="12.0" y="6.4" width="1.6" height="1.6" fill="#fff"/><rect x="17.3" y="7.2" width="1.6" height="1.6" fill="#202020"/><rect x="16.5" y="6.4" width="1.6" height="1.6" fill="#fff"/><rect x="21.8" y="7.2" width="1.6" height="1.6" fill="#202020"/><rect x="21.0" y="6.4" width="1.6" height="1.6" fill="#fff"/><rect x="26.3" y="7.2" width="1.6" height="1.6" fill="#202020"/><rect x="25.5" y="6.4" width="1.6" height="1.6" fill="#fff"/><rect x="2.3" y="11.6" width="1.6" height="1.6" fill="#202020"/><rect x="1.5" y="10.8" width="1.6" height="1.6" fill="#fff"/><rect x="6.8" y="11.6" width="1.6" height="1.6" fill="#202020"/><rect x="6.0" y="10.8" width="1.6" height="1.6" fill="#fff"/><rect x="11.3" y="11.6" width="1.6" height="1.6" fill="#202020"/><rect x="10.5" y="10.8" width="1.6" height="1.6" fill="#fff"/><rect x="15.8" y="11.6" width="1.6" height="1.6" fill="#202020"/><rect x="15.0" y="10.8" width="1.6" height="1.6" fill="#fff"/><rect x="20.3" y="11.6" width="1.6" height="1.6" fill="#202020"/><rect x="19.5" y="10.8" width="1.6" height="1.6" fill="#fff"/><rect x="24.8" y="11.6" width="1.6" height="1.6" fill="#202020"/><rect x="24.0" y="10.8" width="1.6" height="1.6" fill="#fff"/></svg>
<div class="a rs" style="left:764px;top:218px;width:17px;height:20px;"></div><svg class="a" style="left:764px;top:218px;" width="17" height="20" viewBox="0 0 17 20"><path d="M8.0 4v11M2.5 9.5h11" stroke="#000" stroke-width="2.8" fill="none"/></svg><div class="a rs" style="left:788px;top:218px;width:18px;height:20px;"></div><svg class="a" style="left:788px;top:218px;" width="18" height="20" viewBox="0 0 18 20"><rect x="4.5" y="9" width="6" height="6" fill="none" stroke="#000" stroke-width="1.6"/><path d="M7.5 12l6-6.5M9 4.8h5v5" stroke="#000" stroke-width="1.8" fill="none"/></svg><div class="a rs" style="left:812px;top:218px;width:20px;height:20px;"></div><svg class="a" style="left:812px;top:218px;" width="20" height="20" viewBox="0 0 20 20"><path d="M4.5 4.5l10 10M14.5 4.5l-10 10" stroke="#000" stroke-width="2.2" fill="none"/></svg>
<div class="a" style="left:370px;top:244px;width:464px;height:539px;background:#505a8c;"></div>
<div class="a hd" style="left:371px;top:244px;width:17px;height:24px;"></div>
<svg class="a" style="left:0;top:0" width="1" height="1"><path d="M374.5 254.0L379.5 259.0L384.5 254.0Z" fill="#404040"/></svg>
<div class="a hd" style="left:388px;top:244px;width:115px;height:24px;"></div><span class="t" style="top:249.96px;font:16px/1 'Liberation Sans',sans-serif;color:#000;letter-spacing:-0.420px;left:391.00px;">Name</span>
<div class="a hd" style="left:503px;top:244px;width:113px;height:24px;"></div><span class="t" style="top:249.96px;font:16px/1 'Liberation Sans',sans-serif;color:#000;letter-spacing:-0.147px;left:506.00px;">Value</span>
<div class="a hd" style="left:616px;top:244px;width:64px;height:24px;"></div><span class="t" style="top:249.96px;font:16px/1 'Liberation Sans',sans-serif;color:#000;letter-spacing:-0.256px;left:618.00px;">Kind</span>
<div class="a hd" style="left:680px;top:244px;width:155px;height:24px;overflow:hidden;"><span class="t" style="top:5.96px;font:16px/1 'Liberation Sans',sans-serif;color:#000;letter-spacing:-0.006px;left:3.00px;">Mode</span></div>
<div class="a" style="left:703px;top:246px;width:114px;height:21px;background:#e2ece2;box-shadow:inset 1px 1px #fff,inset -1px -1px #808080;"></div>
<div class="a" style="left:728px;top:247px;width:1px;height:19px;background:#c0c8c0;"></div>
<div class="a" style="left:791px;top:247px;width:1px;height:19px;background:#c0c8c0;"></div>
<svg class="a" style="left:703px;top:246px;" width="114" height="21" viewBox="0 0 114 21"><path d="M4 3h4v14h8" fill="none" stroke="#202020" stroke-width="1.3"/><path d="M21 9.5h-8M16 5.5l-4.5 4 4.5 4" fill="none" stroke="#808080" stroke-width="2"/>
<rect x="35" y="4" width="10" height="10" fill="#ff8c00" stroke="#202020" stroke-width="1.2"/>
<path d="M92 9.5h8M96 5.5l4.500 4-4.5 4" fill="none" stroke="#808080" stroke-width="2"/><path d="M98 17h7v-14h5" fill="none" stroke="#202020" stroke-width="1.3"/></svg>
<span class="t" style="top:248.81px;font:17px/1 'Liberation Serif',serif;color:#a8a8b0;letter-spacing:-0.351px;left:755.00px;">Now</span>
<svg class="a" style="left:0;top:0" width="1" height="1"><path d="M823.5 251L829.5 257L823.5 263Z" fill="#000"/></svg>
<div class="a" style="left:370.5px;top:273.5px;width:377px;height:22.5px;background:#fff;"></div>
<span class="t" style="top:277.46px;font:16px/1 'Liberation Sans',sans-serif;color:#000;left:429.50px;">a</span>
<span class="t" style="top:277.46px;font:16px/1 'Liberation Sans',sans-serif;color:#000;left:506.50px;">1</span>
<span class="t" style="top:277.46px;font:16px/1 'Liberation Sans',sans-serif;color:#000;letter-spacing:-0.413px;left:618.00px;">Signal</span>
<span class="t" style="top:277.46px;font:16px/1 'Liberation Sans',sans-serif;color:#000;letter-spacing:0.828px;left:683.00px;">In</span>
<svg class="a" style="left:400px;top:273px;" width="24" height="24" viewBox="0 0 24 24"><path d="M12 1l11 11h-5.500l-5.500-5z" fill="#4058c0"/><path d="M12 1l-11 11h5.500l5.500-5z" fill="#78a8f0"/>
<path d="M23 12l-11 11v-6l5.500-5z" fill="#3030b0"/><path d="M1 12l11 11v-6l-5.500-5z" fill="#3c50c4"/>
<path d="M12 7l5.500 5-5.500 5.500-5.500-5.500z" fill="#2868f0"/><path d="M0.3 15.500h4.700v-3.200l6.300 5.200-6.300 5.200v-3.200h-4.700z" fill="url(#ga)" stroke="#0c5c0c" stroke-width="0.500"/></svg>
<span class="t" style="top:301.46px;font:16px/1 'Liberation Sans',sans-serif;color:#fff;left:429.50px;">b</span>
<span class="t" style="top:301.46px;font:16px/1 'Liberation Sans',sans-serif;color:#fff;left:506.50px;">1</span>
<span class="t" style="top:301.46px;font:16px/1 'Liberation Sans',sans-serif;color:#fff;letter-spacing:-0.413px;left:618.00px;">Signal</span>
<span class="t" style="top:301.46px;font:16px/1 'Liberation Sans',sans-serif;color:#fff;letter-spacing:0.828px;left:683.00px;">In</span>
<svg class="a" style="left:400px;top:297px;" width="24" height="24" viewBox="0 0 24 24"><path d="M12 1l11 11h-5.500l-5.500-5z" fill="#4058c0"/><path d="M12 1l-11 11h5.500l5.500-5z" fill="#78a8f0"/>
<path d="M23 12l-11 11v-6l5.500-5z" fill="#3030b0"/><path d="M1 12l11 11v-6l-5.500-5z" fill="#3c50c4"/>
<path d="M12 7l5.500 5-5.500 5.500-5.500-5.500z" fill="#2868f0"/><path d="M0.3 15.500h4.700v-3.200l6.300 5.200-6.300 5.200v-3.200h-4.700z" fill="url(#ga)" stroke="#0c5c0c" stroke-width="0.500"/></svg>
<span class="t" style="top:325.46px;font:16px/1 'Liberation Sans',sans-serif;color:#fff;left:429.50px;">c</span>
<span class="t" style="top:325.46px;font:16px/1 'Liberation Sans',sans-serif;color:#fff;left:506.50px;">1</span>
<span class="t" style="top:325.46px;font:16px/1 'Liberation Sans',sans-serif;color:#fff;letter-spacing:-0.413px;left:618.00px;">Signal</span>
<span class="t" style="top:325.46px;font:16px/1 'Liberation Sans',sans-serif;color:#fff;letter-spacing:0.828px;left:683.00px;">In</span>
<svg class="a" style="left:400px;top:321px;" width="24" height="24" viewBox="0 0 24 24"><path d="M12 1l11 11h-5.500l-5.500-5z" fill="#4058c0"/><path d="M12 1l-11 11h5.500l5.500-5z" fill="#78a8f0"/>
<path d="M23 12l-11 11v-6l5.500-5z" fill="#3030b0"/><path d="M1 12l11 11v-6l-5.500-5z" fill="#3c50c4"/>
<path d="M12 7l5.500 5-5.500 5.500-5.500-5.500z" fill="#2868f0"/><path d="M0.3 15.500h4.700v-3.200l6.300 5.200-6.300 5.200v-3.200h-4.700z" fill="url(#ga)" stroke="#0c5c0c" stroke-width="0.500"/></svg>
<span class="t" style="top:349.46px;font:16px/1 'Liberation Sans',sans-serif;color:#fff;left:429.50px;">s</span>
<span class="t" style="top:349.46px;font:16px/1 'Liberation Sans',sans-serif;color:#fff;left:505.50px;">U</span>
<span class="t" style="top:349.46px;font:16px/1 'Liberation Sans',sans-serif;color:#fff;letter-spacing:-0.413px;left:618.00px;">Signal</span>
<span class="t" style="top:349.46px;font:16px/1 'Liberation Sans',sans-serif;color:#fff;letter-spacing:0.737px;left:683.00px;">Out</span>
<svg class="a" style="left:400px;top:345px;" width="24" height="24" viewBox="0 0 24 24"><path d="M12 1l11 11h-5.500l-5.500-5z" fill="#4058c0"/><path d="M12 1l-11 11h5.500l5.500-5z" fill="#78a8f0"/>
<path d="M23 12l-11 11v-6l5.500-5z" fill="#3030b0"/><path d="M1 12l11 11v-6l-5.500-5z" fill="#3c50c4"/>
<path d="M12 7l5.500 5-5.500 5.500-5.500-5.500z" fill="#2868f0"/><path d="M11.8 15.500h4.700v-3.200l6.300 5.200-6.300 5.200v-3.200h-4.700z" fill="url(#ga)" stroke="#0c5c0c" stroke-width="0.500"/></svg>
<div class="a" style="left:369px;top:790px;width:467px;height:22px;background:#f8f8f8;"></div>
<div class="a rs" style="left:369px;top:790px;width:25px;height:22px;background:#f0f0f0;"></div>
<svg class="a" style="left:0;top:0" width="1" height="1"><path d="M383.5 796L378.5 801L383.5 806Z" fill="#b0b0b0"/></svg>
<div class="a rs" style="left:811px;top:790px;width:25px;height:22px;background:#f0f0f0;"></div>
<svg class="a" style="left:0;top:0" width="1" height="1"><path d="M821.5 796L826.5 801L821.5 806Z" fill="#b0b0b0"/></svg>
<div class="a" style="left:848px;top:212.5px;width:1071px;height:602.0px;background:#b0b0b0;"></div><div class="a" style="left:849px;top:213.5px;width:1069px;height:601.0px;background:#fff;"></div><div class="a" style="left:852px;top:215.8px;width:1065px;height:597.7px;background:#f0f0f0;"></div>
<svg class="a" style="left:854px;top:218px;" width="23" height="23" viewBox="0 0 23 23"><rect x="0" y="0" width="21" height="21" fill="#c8c8c8"/><rect x="1.500" y="2" width="17.500" height="2.600" fill="#fff"/>
<rect x="1.300" y="7.600" width="18.100" height="11.800" fill="#000"/>
<path d="M1.300 10h3v3h3M9.500 13v-3h4v3.500h6M1.300 15.500h5v3M9.500 19v-2h3" stroke="#109040" stroke-width="1.500" fill="none"/>
<path d="M8 7v13" stroke="#30d0d8" stroke-width="1.300"/>
<path d="M12 17.600h7.500" stroke="#4010d0" stroke-width="1.800"/>
<path d="M0 21.600h21.600V0" stroke="#181818" stroke-width="1.800" fill="none"/></svg>
<span class="t" style="top:221.96px;font:16px/1 'Liberation Sans',sans-serif;color:#000;letter-spacing:0.270px;left:882.00px;">Wave - Default</span>
<div class="a" style="left:1000px;top:223px;width:403px;height:4.3px;background:linear-gradient(#fff 0,#fff 2px,#8a8a8a 2px,#8a8a8a 3.8px,transparent 3.8px);border-right:1px solid #8a8a8a;"></div><div class="a" style="left:1000px;top:230.5px;width:403px;height:4.3px;background:linear-gradient(#fff 0,#fff 2px,#8a8a8a 2px,#8a8a8a 3.8px,transparent 3.8px);border-right:1px solid #8a8a8a;"></div><div class="a" style="left:1435px;top:223px;width:405px;height:4.3px;background:linear-gradient(#fff 0,#fff 2px,#8a8a8a 2px,#8a8a8a 3.8px,transparent 3.8px);border-right:1px solid #8a8a8a;"></div><div class="a" style="left:1435px;top:230.5px;width:405px;height:4.3px;background:linear-gradient(#fff 0,#fff 2px,#8a8a8a 2px,#8a8a8a 3.8px,transparent 3.8px);border-right:1px solid #8a8a8a;"></div><svg class="a" style="left:1406px;top:222px;" width="28" height="14" viewBox="0 0 28 14"><rect width="28" height="14" fill="#f8f8f8"/><rect x="1.5" y="2.0" width="1.6" height="1.6" fill="#303030"/><rect x="6.0" y="2.0" width="1.6" height="1.6" fill="#303030"/><rect x="10.5" y="2.0" width="1.6" height="1.6" fill="#303030"/><rect x="15.0" y="2.0" width="1.6" height="1.6" fill="#303030"/><rect x="19.5" y="2.0" width="1.6" height="1.6" fill="#303030"/><rect x="24.0" y="2.0" width="1.6" height="1.6" fill="#303030"/><rect x="3.0" y="6.4" width="1.6" height="1.6" fill="#303030"/><rect x="7.5" y="6.4" width="1.6" height="1.6" fill="#303030"/><rect x="12.0" y="6.4" width="1.6" height="1.6" fill="#303030"/><rect x="16.5" y="6.4" width="1.6" height="1.6" fill="#303030"/><rect x="21.0" y="6.4" width="1.6" height="1.6" fill="#303030"/><rect x="25.5" y="6.4" width="1.6" height="1.6" fill="#303030"/><rect x="1.5" y="10.8" width="1.6" height="1.6" fill="#303030"/><rect x="6.0" y="10.8" width="1.6" height="1.6" fill="#303030"/><rect x="10.5" y="10.8" width="1.6" height="1.6" fill="#303030"/><rect x="15.0" y="10.8" width="1.6" height="1.6" fill="#303030"/><rect x="19.5" y="10.8" width="1.6" height="1.6" fill="#303030"/><rect x="24.0" y="10.8" width="1.6" height="1.6" fill="#303030"/></svg>
<div class="a rs" style="left:1846px;top:218px;width:18px;height:20px;"></div><svg class="a" style="left:1846px;top:218px;" width="18" height="20" viewBox="0 0 18 20"><path d="M8.5 4v11M3.0 9.5h11" stroke="#000" stroke-width="2.8" fill="none"/></svg><div class="a rs" style="left:1870px;top:218px;width:18px;height:20px;"></div><svg class="a" style="left:1870px;top:218px;" width="18" height="20" viewBox="0 0 18 20"><rect x="4.5" y="9" width="6" height="6" fill="none" stroke="#000" stroke-width="1.6"/><path d="M7.5 12l6-6.5M9 4.8h5v5" stroke="#000" stroke-width="1.8" fill="none"/></svg><div class="a rs" style="left:1894px;top:218px;width:21px;height:20px;"></div><svg class="a" style="left:1894px;top:218px;" width="21" height="20" viewBox="0 0 21 20"><path d="M5.0 4.5l10 10M15.0 4.5l-10 10" stroke="#000" stroke-width="2.2" fill="none"/></svg>
<div class="a" style="left:852.5px;top:244px;width:1063.5px;height:565px;background:#fff;"></div>
<div class="a" style="left:852.6px;top:273px;width:1.3px;height:536px;background:#b4b4b4;"></div>
<div class="a" style="left:852.5px;top:244px;width:238.5px;height:29px;background:#808080;"></div>
<div class="a" style="left:866px;top:277px;width:225px;height:437px;background:#808080;"></div>
<div class="a" style="left:852.5px;top:718px;width:67.5px;height:59px;background:#808080;"></div>
<div class="a" style="left:920px;top:751px;width:171px;height:26px;background:#808080;"></div>
<div class="a" style="left:853px;top:782px;width:13px;height:27px;background:#808080;"></div>
<div class="a" style="left:1096px;top:244px;width:150px;height:29px;background:#808080;"></div>
<div class="a" style="left:1096px;top:277px;width:150px;height:437px;background:#808080;"></div>
<div class="a" style="left:1096px;top:751px;width:150px;height:26px;background:#808080;"></div>
<div class="a" style="left:1251px;top:245px;width:634px;height:28px;background:#000;"></div>
<div class="a" style="left:1251px;top:277px;width:634px;height:437px;background:#000;"></div>
<div class="a" style="left:1251px;top:718px;width:634px;height:59px;background:#000;"></div>
<div class="a" style="left:1890px;top:245px;width:25px;height:28px;background:#808080;"></div>
<div class="a" style="left:1890px;top:718px;width:25px;height:59px;background:#808080;"></div>
<div class="a" style="left:1890px;top:781px;width:25px;height:28px;background:#808080;"></div>
<svg class="a" style="left:869px;top:248px;" width="24" height="26" viewBox="0 0 24 26"><path d="M8 1l5 3.500-7 7.500-5-3.500z" fill="#b020d0"/>
<rect x="13" y="9" width="10" height="11" fill="#18a038"/>
<circle cx="14" cy="9" r="4.6" fill="#00e8f8"/>
<path d="M8 11l8 6.500-8 7.500-7.500-7.500z" fill="#0858e8"/></svg>
<svg class="a" style="left:0;top:0" width="1" height="1"><path d="M899 262.0L903 266.0L907 262.0Z" fill="#000"/></svg>
<span class="t" style="top:253.46px;font:16px/1 'Liberation Sans',sans-serif;color:#fff;letter-spacing:-0.307px;right:682.00px;">Msgs</span>
<div class="a" style="left:866px;top:281px;width:225px;height:23.8px;background:#000;"></div>
<div class="a" style="left:1096px;top:281px;width:150px;height:23.8px;background:#000;"></div>
<span class="t" style="top:284.96px;font:16px/1 'Liberation Sans',sans-serif;color:#fff;letter-spacing:0.213px;left:925.00px;">sim:/circuito/a</span>
<span class="t" style="top:284.96px;font:16px/1 'Liberation Sans',sans-serif;color:#fff;left:1099.00px;">1</span>
<svg class="a" style="left:895.5px;top:280.3px;" width="24" height="24" viewBox="0 0 24 24"><path d="M12 1l11 11h-5.500l-5.500-5z" fill="#4058c0"/><path d="M12 1l-11 11h5.500l5.500-5z" fill="#78a8f0"/>
<path d="M23 12l-11 11v-6l5.500-5z" fill="#3030b0"/><path d="M1 12l11 11v-6l-5.500-5z" fill="#3c50c4"/>
<path d="M12 7l5.500 5-5.500 5.500-5.500-5.500z" fill="#2868f0"/><path d="M0.3 15.500h4.700v-3.200l6.300 5.200-6.300 5.200v-3.200h-4.700z" fill="url(#ga)" stroke="#0c5c0c" stroke-width="0.500"/></svg>
<span class="t" style="top:310.46px;font:16px/1 'Liberation Sans',sans-serif;color:#fff;letter-spacing:0.213px;left:925.00px;">sim:/circuito/b</span>
<span class="t" style="top:310.46px;font:16px/1 'Liberation Sans',sans-serif;color:#fff;left:1099.00px;">1</span>
<svg class="a" style="left:895.5px;top:305.8px;" width="24" height="24" viewBox="0 0 24 24"><path d="M12 1l11 11h-5.500l-5.500-5z" fill="#4058c0"/><path d="M12 1l-11 11h5.500l5.500-5z" fill="#78a8f0"/>
<path d="M23 12l-11 11v-6l5.500-5z" fill="#3030b0"/><path d="M1 12l11 11v-6l-5.500-5z" fill="#3c50c4"/>
<path d="M12 7l5.500 5-5.500 5.500-5.500-5.500z" fill="#2868f0"/><path d="M0.3 15.500h4.700v-3.200l6.300 5.200-6.300 5.200v-3.200h-4.700z" fill="url(#ga)" stroke="#0c5c0c" stroke-width="0.500"/></svg>
<span class="t" style="top:335.96px;font:16px/1 'Liberation Sans',sans-serif;color:#fff;letter-spacing:0.273px;left:925.00px;">sim:/circuito/c</span>
<span class="t" style="top:335.96px;font:16px/1 'Liberation Sans',sans-serif;color:#fff;left:1099.00px;">0</span>
<svg class="a" style="left:895.5px;top:331.3px;" width="24" height="24" viewBox="0 0 24 24"><path d="M12 1l11 11h-5.500l-5.500-5z" fill="#4058c0"/><path d="M12 1l-11 11h5.500l5.500-5z" fill="#78a8f0"/>
<path d="M23 12l-11 11v-6l5.500-5z" fill="#3030b0"/><path d="M1 12l11 11v-6l-5.500-5z" fill="#3c50c4"/>
<path d="M12 7l5.500 5-5.500 5.500-5.500-5.500z" fill="#2868f0"/><path d="M0.3 15.500h4.700v-3.200l6.300 5.200-6.300 5.200v-3.200h-4.700z" fill="url(#ga)" stroke="#0c5c0c" stroke-width="0.500"/></svg>
<span class="t" style="top:361.46px;font:16px/1 'Liberation Sans',sans-serif;color:#fff;letter-spacing:0.273px;left:925.00px;">sim:/circuito/s</span>
<span class="t" style="top:361.46px;font:16px/1 'Liberation Sans',sans-serif;color:#fff;left:1099.00px;">1</span>
<svg class="a" style="left:895.5px;top:356.8px;" width="24" height="24" viewBox="0 0 24 24"><path d="M12 1l11 11h-5.500l-5.500-5z" fill="#4058c0"/><path d="M12 1l-11 11h5.500l5.500-5z" fill="#78a8f0"/>
<path d="M23 12l-11 11v-6l5.500-5z" fill="#3030b0"/><path d="M1 12l11 11v-6l-5.500-5z" fill="#3c50c4"/>
<path d="M12 7l5.500 5-5.500 5.500-5.500-5.500z" fill="#2868f0"/><path d="M11.8 15.500h4.700v-3.200l6.300 5.200-6.300 5.200v-3.200h-4.700z" fill="url(#ga)" stroke="#0c5c0c" stroke-width="0.500"/></svg>
<div class="a" style="left:872px;top:381px;width:212px;height:1px;background:#000;"></div>
<div class="a" style="left:1099px;top:381px;width:141px;height:1px;background:#000;"></div>
<svg class="a" style="left:868px;top:376px;" width="8" height="11" viewBox="0 0 8 11"><path d="M1.5 1.5v8l4-4z" fill="none" stroke="#000" stroke-width="1"/></svg>
<svg class="a" style="left:1251px;top:277px;" width="634" height="437" viewBox="0 0 634 437"><rect x="103" y="0" width="1" height="437" fill="#7c7c7c"/><rect x="203" y="0" width="1" height="437" fill="#7c7c7c"/><rect x="302" y="0" width="1" height="437" fill="#7c7c7c"/><rect x="401" y="0" width="1" height="437" fill="#7c7c7c"/><rect x="500" y="0" width="1" height="437" fill="#7c7c7c"/><rect x="600" y="0" width="1" height="437" fill="#7c7c7c"/><rect x="4" y="0" width="1" height="437" fill="#78a878"/><rect x="3.8" y="7.5" width="1.4" height="9" fill="#c84060"/><rect x="3.8" y="33.0" width="1.4" height="9" fill="#c84060"/><rect x="3.8" y="58.3" width="1.4" height="9" fill="#c84060"/><rect x="3.8" y="83.8" width="1.4" height="9" fill="#c84060"/><path d="M4.5 6.5H252.2V24.19999999999999H500.4V6.5H629.5" fill="none" stroke="#37dd0c" stroke-width="1.8" stroke-linejoin="round"/><path d="M4.5 32.0H128.1V49.69999999999999H252.2V32.0H376.3V49.69999999999999H500.4V32.0H624.5V49.69999999999999H629.5" fill="none" stroke="#37dd0c" stroke-width="1.8" stroke-linejoin="round"/><path d="M4.5 57.30000000000001H63.6V75.0H128.1V57.30000000000001H187.7V75.0H252.2V57.30000000000001H311.8V75.0H376.3V57.30000000000001H435.9V75.0H500.4V57.30000000000001H560.0V75.0H624.5V57.30000000000001H629.5" fill="none" stroke="#37dd0c" stroke-width="1.8" stroke-linejoin="round"/><path d="M4.5 82.80000000000001H187.7V100.5H252.2V82.80000000000001H311.8V100.5H376.3V82.80000000000001H435.9V100.5H500.4V82.80000000000001H629.5" fill="none" stroke="#37dd0c" stroke-width="1.8" stroke-linejoin="round"/></svg>
<div class="a" style="left:1255px;top:246px;width:1px;height:27px;background:#5a9a5a;"></div>
<svg class="a" style="left:1251px;top:718px;" width="634" height="59" viewBox="0 0 634 59"><rect x="28.5" y="4.500" width="1.6" height="6" fill="#37dd0c"/><rect x="53.5" y="0" width="1.6" height="10.5" fill="#37dd0c"/><rect x="77.5" y="4.500" width="1.6" height="6" fill="#37dd0c"/><rect x="102.5" y="0" width="1.6" height="10.5" fill="#37dd0c"/><rect x="127.5" y="4.500" width="1.6" height="6" fill="#37dd0c"/><rect x="152.5" y="0" width="1.6" height="10.5" fill="#37dd0c"/><rect x="177.5" y="4.500" width="1.6" height="6" fill="#37dd0c"/><rect x="202.5" y="0" width="1.6" height="10.5" fill="#37dd0c"/><rect x="226.5" y="4.500" width="1.6" height="6" fill="#37dd0c"/><rect x="251.5" y="0" width="1.6" height="10.5" fill="#37dd0c"/><rect x="276.5" y="4.500" width="1.6" height="6" fill="#37dd0c"/><rect x="301.5" y="0" width="1.6" height="10.5" fill="#37dd0c"/><rect x="326.5" y="4.500" width="1.6" height="6" fill="#37dd0c"/><rect x="350.5" y="0" width="1.6" height="10.5" fill="#37dd0c"/><rect x="375.5" y="4.500" width="1.6" height="6" fill="#37dd0c"/><rect x="400.5" y="0" width="1.6" height="10.5" fill="#37dd0c"/><rect x="425.5" y="4.500" width="1.6" height="6" fill="#37dd0c"/><rect x="450.5" y="0" width="1.6" height="10.5" fill="#37dd0c"/><rect x="475.5" y="4.500" width="1.6" height="6" fill="#37dd0c"/><rect x="499.5" y="0" width="1.6" height="10.5" fill="#37dd0c"/><rect x="524.5" y="4.500" width="1.6" height="6" fill="#37dd0c"/><rect x="549.5" y="0" width="1.6" height="10.5" fill="#37dd0c"/><rect x="574.5" y="4.500" width="1.6" height="6" fill="#37dd0c"/><rect x="599.5" y="0" width="1.6" height="10.5" fill="#37dd0c"/><rect x="624.5" y="4.500" width="1.6" height="6" fill="#37dd0c"/><rect x="4" y="33" width="626" height="1" fill="#909090"/><rect x="4" y="0" width="1.500" height="34" fill="#e0a800"/></svg>
<span class="t" style="top:735.16px;font:16px/1 'Liberation Sans',sans-serif;color:#37dd0c;letter-spacing:-0.028px;left:1334.78px;">20 ns</span>
<span class="t" style="top:735.16px;font:16px/1 'Liberation Sans',sans-serif;color:#37dd0c;letter-spacing:-0.028px;left:1434.06px;">40 ns</span>
<span class="t" style="top:735.16px;font:16px/1 'Liberation Sans',sans-serif;color:#37dd0c;letter-spacing:-0.028px;left:1533.34px;">60 ns</span>
<span class="t" style="top:735.16px;font:16px/1 'Liberation Sans',sans-serif;color:#37dd0c;letter-spacing:-0.028px;left:1632.62px;">80 ns</span>
<span class="t" style="top:735.16px;font:16px/1 'Liberation Sans',sans-serif;color:#37dd0c;letter-spacing:-0.340px;left:1728.40px;">100 ns</span>
<span class="t" style="top:735.16px;font:16px/1 'Liberation Sans',sans-serif;color:#37dd0c;letter-spacing:-0.340px;left:1827.68px;">120 ns</span>
<div class="a" style="left:1256px;top:730px;width:14px;height:20px;overflow:hidden;"><span class="t" style="top:5.16px;font:16px/1 'Liberation Sans',sans-serif;color:#37dd0c;letter-spacing:-0.061px;left:-17.50px;">0 ns</span></div>
<div class="a" style="left:1256px;top:753px;width:37px;height:23px;border:1.5px solid #e0a800;"></div>
<span class="t" style="top:758.46px;font:16px/1 'Liberation Sans',sans-serif;color:#e8b000;letter-spacing:-0.311px;left:1259.00px;">0 ns</span>
<div class="a" style="left:920px;top:718px;width:171px;height:33px;background:#fff;"></div>
<div class="a" style="left:1096px;top:718px;width:150px;height:33px;background:#fff;"></div>
<span class="t" style="top:727.46px;font:16px/1 'Liberation Sans',sans-serif;color:#000;letter-spacing:-0.003px;right:843.50px;">Now</span>
<span class="t" style="top:727.46px;font:16px/1 'Liberation Sans',sans-serif;color:#000;letter-spacing:-0.049px;right:688.50px;">48528912 ns</span>
<span class="t" style="top:757.46px;font:16px/1 'Liberation Sans',sans-serif;color:#fff;letter-spacing:-0.169px;right:843.50px;">Cursor 1</span>
<span class="t" style="top:757.46px;font:16px/1 'Liberation Sans',sans-serif;color:#fff;letter-spacing:-0.311px;right:688.50px;">0 ns</span>
<svg class="a" style="left:866px;top:726px;" width="56" height="18" viewBox="0 0 56 18"><path d="M1 11l4-9h2l3 9" stroke="#c4c4c4" stroke-width="1.600" fill="none"/><path d="M9 2l3 9 3-9" stroke="#585858" stroke-width="1.600" fill="none"/><path d="M1 14h14M3 12l-2 2 2 2M13 12l2 2-2 2" stroke="#3080f0" stroke-width="1.2" fill="none"/>
<rect x="18" y="1" width="16" height="13" rx="1" fill="#b8d0f0" stroke="#4080d8" stroke-width="1.2"/><rect x="18" y="1" width="16" height="3" fill="#4080d8"/><path d="M20 7h8M20 10h5" stroke="#fff" stroke-width="1.5"/><path d="M24 12l6-2 2 3-6 3z" fill="#4888e0"/>
<circle cx="45" cy="8" r="7.500" fill="#48b848" stroke="#90d890" stroke-width="1"/><path d="M45 4.500v7M41.500 8h7" stroke="#fff" stroke-width="2.4"/></svg>
<svg class="a" style="left:870px;top:754px;" width="58" height="20" viewBox="0 0 58 20"><path d="M4 10V6a4 4 0 0 1 8 0v2" stroke="#c8c8c8" stroke-width="1.800" fill="none"/>
<rect x="1" y="9" width="15" height="10" fill="#f0b830" stroke="#d89810" stroke-width="1"/><rect x="5" y="12" width="7" height="4" fill="#f8d880" stroke="#c08000" stroke-width="0.800"/>
<path d="M21 16l8-8" stroke="#5090e8" stroke-width="4.500" stroke-linecap="round"/><path d="M29 8l3-4M33 7l2-2M30 3l3 1 1 3" stroke="#d8d8d8" stroke-width="2" fill="none"/>
<circle cx="47" cy="9" r="7.800" fill="#e84040" stroke="#f09090" stroke-width="1"/><rect x="43" y="7.500" width="8" height="3" fill="#fff"/></svg>
<div class="a" style="left:852.5px;top:782px;width:238.5px;height:27px;background:#808080;"></div>
<div class="a" style="left:1096px;top:782px;width:150px;height:27px;background:#808080;"></div>
<div class="a" style="left:866px;top:783px;width:225px;height:23px;background:#f8f8f8;"></div>
<div class="a rs" style="left:866px;top:783px;width:24px;height:23px;background:#f0f0f0;"></div>
<svg class="a" style="left:0;top:0" width="1" height="1"><path d="M879.5 789.5L874.5 794.5L879.5 799.5Z" fill="#a0a0a0"/></svg>
<div class="a rs" style="left:1066px;top:783px;width:25px;height:23px;background:#f0f0f0;"></div>
<svg class="a" style="left:0;top:0" width="1" height="1"><path d="M1076.5 789.5L1081.5 794.5L1076.5 799.5Z" fill="#a0a0a0"/></svg>
<div class="a" style="left:1096px;top:783px;width:149px;height:23px;background:#f8f8f8;"></div>
<div class="a rs" style="left:1096px;top:783px;width:24px;height:23px;background:#f0f0f0;"></div>
<svg class="a" style="left:0;top:0" width="1" height="1"><path d="M1109.5 789.5L1104.5 794.5L1109.5 799.5Z" fill="#a0a0a0"/></svg>
<div class="a rs" style="left:1220px;top:783px;width:25px;height:23px;background:#f0f0f0;"></div>
<svg class="a" style="left:0;top:0" width="1" height="1"><path d="M1230.5 789.5L1235.5 794.5L1230.5 799.5Z" fill="#a0a0a0"/></svg>
<div class="a" style="left:1251px;top:782px;width:634px;height:27px;background:#c8c8c8;box-shadow:inset 1px 1px #808080;"></div>
<div class="a rs" style="left:1252px;top:784px;width:21px;height:22px;background:#f0f0f0;"></div>
<svg class="a" style="left:0;top:0" width="1" height="1"><path d="M1265.5 790L1260.5 795L1265.5 800Z" fill="#000"/></svg>
<div class="a rs" style="left:1277px;top:784px;width:11px;height:22px;background:#f0f0f0;"></div>
<div class="a rs" style="left:1860px;top:784px;width:22px;height:22px;background:#f0f0f0;"></div>
<svg class="a" style="left:0;top:0" width="1" height="1"><path d="M1869.5 790L1874.5 795L1869.5 800Z" fill="#000"/></svg>
<div class="a" style="left:1889.8px;top:277px;width:1px;height:437px;background:#b8b8b8;"></div>
<div class="a" style="left:1890.8px;top:277px;width:20.2px;height:437px;background:#f0f0f0;"></div>
<div class="a" style="left:1911px;top:277px;width:2.6px;height:437px;background:#909090;"></div>
<div class="a" style="left:1913.6px;top:277px;width:4px;height:437px;background:#fff;"></div>
<div class="a rs" style="left:1891px;top:279px;width:20px;height:21px;background:#f0f0f0;"></div>
<svg class="a" style="left:0;top:0" width="1" height="1"><path d="M1896.4 293.1L1901 288.5L1905.6 293.1Z" fill="#000"/></svg>
<div class="a" style="left:1891px;top:302px;width:20px;height:25px;background:#fff;box-shadow:inset -1px 0 #c0c0c0;"></div>
<div class="a rs" style="left:1891px;top:689px;width:20px;height:21px;background:#f0f0f0;"></div>
<svg class="a" style="left:0;top:0" width="1" height="1"><path d="M1896.4 697.2L1901 701.8L1905.6 697.2Z" fill="#000"/></svg>
<div class="a" style="left:848px;top:809px;width:1071px;height:1px;background:#a0a0a0;"></div>
<div class="a" style="left:848px;top:810px;width:1071px;height:4px;background:#fff;"></div>
<div class="a" style="left:0px;top:825.3px;width:1920px;height:183px;background:#f0f0f0;border-top:1px solid #b4b4b4;"></div>
<div class="a" style="left:1px;top:826.3px;width:1919px;height:1.5px;background:#fff;"></div>
<svg class="a" style="left:6px;top:829px;" width="21" height="22" viewBox="0 0 21 22"><path d="M1 21V6q0-5 5-5h9q5 0 5 5v15l-4-3V8H5v10z" fill="#908888" stroke="#605858" stroke-width="1"/>
<path d="M5 8V4h11v4z" fill="#fff"/><path d="M1 14l4-2M20 14l-4-2" stroke="#d0c8c8" stroke-width="2"/></svg>
<span class="t" style="top:833.46px;font:16px/1 'Liberation Sans',sans-serif;color:#000;letter-spacing:0.147px;left:32.00px;">Transcript</span>
<div class="a" style="left:114px;top:835px;width:846px;height:4.3px;background:linear-gradient(#fff 0,#fff 2px,#8a8a8a 2px,#8a8a8a 3.8px,transparent 3.8px);border-right:1px solid #8a8a8a;"></div><div class="a" style="left:114px;top:842.5px;width:846px;height:4.3px;background:linear-gradient(#fff 0,#fff 2px,#8a8a8a 2px,#8a8a8a 3.8px,transparent 3.8px);border-right:1px solid #8a8a8a;"></div><div class="a" style="left:992px;top:835px;width:848px;height:4.3px;background:linear-gradient(#fff 0,#fff 2px,#8a8a8a 2px,#8a8a8a 3.8px,transparent 3.8px);border-right:1px solid #8a8a8a;"></div><div class="a" style="left:992px;top:842.5px;width:848px;height:4.3px;background:linear-gradient(#fff 0,#fff 2px,#8a8a8a 2px,#8a8a8a 3.8px,transparent 3.8px);border-right:1px solid #8a8a8a;"></div><svg class="a" style="left:963px;top:834px;" width="28" height="14" viewBox="0 0 28 14"><rect width="28" height="14" fill="#f8f8f8"/><rect x="1.5" y="2.0" width="1.6" height="1.6" fill="#303030"/><rect x="6.0" y="2.0" width="1.6" height="1.6" fill="#303030"/><rect x="10.5" y="2.0" width="1.6" height="1.6" fill="#303030"/><rect x="15.0" y="2.0" width="1.6" height="1.6" fill="#303030"/><rect x="19.5" y="2.0" width="1.6" height="1.6" fill="#303030"/><rect x="24.0" y="2.0" width="1.6" height="1.6" fill="#303030"/><rect x="3.0" y="6.4" width="1.6" height="1.6" fill="#303030"/><rect x="7.5" y="6.4" width="1.6" height="1.6" fill="#303030"/><rect x="12.0" y="6.4" width="1.6" height="1.6" fill="#303030"/><rect x="16.5" y="6.4" width="1.6" height="1.6" fill="#303030"/><rect x="21.0" y="6.4" width="1.6" height="1.6" fill="#303030"/><rect x="25.5" y="6.4" width="1.6" height="1.6" fill="#303030"/><rect x="1.5" y="10.8" width="1.6" height="1.6" fill="#303030"/><rect x="6.0" y="10.8" width="1.6" height="1.6" fill="#303030"/><rect x="10.5" y="10.8" width="1.6" height="1.6" fill="#303030"/><rect x="15.0" y="10.8" width="1.6" height="1.6" fill="#303030"/><rect x="19.5" y="10.8" width="1.6" height="1.6" fill="#303030"/><rect x="24.0" y="10.8" width="1.6" height="1.6" fill="#303030"/></svg>
<div class="a rs" style="left:1846px;top:830px;width:18px;height:20px;"></div><svg class="a" style="left:1846px;top:830px;" width="18" height="20" viewBox="0 0 18 20"><path d="M8.5 4v11M3.0 9.5h11" stroke="#000" stroke-width="2.8" fill="none"/></svg><div class="a rs" style="left:1870px;top:830px;width:18px;height:20px;"></div><svg class="a" style="left:1870px;top:830px;" width="18" height="20" viewBox="0 0 18 20"><rect x="4.5" y="9" width="6" height="6" fill="none" stroke="#000" stroke-width="1.6"/><path d="M7.5 12l6-6.5M9 4.8h5v5" stroke="#000" stroke-width="1.8" fill="none"/></svg><div class="a rs" style="left:1894px;top:830px;width:21px;height:20px;"></div><svg class="a" style="left:1894px;top:830px;" width="21" height="20" viewBox="0 0 21 20"><path d="M5.0 4.5l10 10M15.0 4.5l-10 10" stroke="#000" stroke-width="2.2" fill="none"/></svg>
<div class="a" style="left:6px;top:853px;width:1883px;height:118px;background:#fff;border-top:2px solid #202020;border-left:2px solid #202020;border-bottom:1px solid #a0a0a0;border-right:1px solid #d0d0d0;"></div>
<span class="t" style="top:859.00px;font:17.5px/1 'Liberation Mono',monospace;color:#2a2a2a;left:11.00px;">wave create -driver freeze -pattern clock -initialvalue 1 -period 100ns -dutycycle 50 -starttime 0ns -endtime 1000ns sim:/circuito/a</span>
<span class="t" style="top:881.70px;font:17.5px/1 'Liberation Mono',monospace;color:#b8963a;left:11.00px;"># Editable Wave items are not compatible with the wave window's standard undo-redo.  Standard undo-redo has been disabled.</span>
<span class="t" style="top:904.40px;font:17.5px/1 'Liberation Mono',monospace;color:#2a2a2a;left:11.00px;"># circuito</span>
<div class="a" style="left:1892px;top:855px;width:24px;height:116px;background:#f8f8f8;"></div>
<div class="a rs" style="left:1892px;top:855px;width:24px;height:23px;background:#f0f0f0;"></div>
<svg class="a" style="left:0;top:0" width="1" height="1"><path d="M1899 869.0L1904 864.0L1909 869.0Z" fill="#000"/></svg>
<div class="a rs" style="left:1892px;top:935px;width:24px;height:11px;background:#f0f0f0;"></div>
<div class="a rs" style="left:1892px;top:947px;width:24px;height:24px;background:#f0f0f0;"></div>
<svg class="a" style="left:0;top:0" width="1" height="1"><path d="M1899 956.5L1904 961.5L1909 956.5Z" fill="#000"/></svg>
<div class="a" style="left:0px;top:972px;width:1920px;height:1px;background:#a0a0a0;"></div>
<div class="a" style="left:0px;top:973px;width:1920px;height:1px;background:#fff;"></div>
<div class="a sk1" style="left:3px;top:978px;width:296px;height:28px;"></div>
<span class="t" style="top:985.46px;font:16px/1 'Liberation Sans',sans-serif;color:#000;letter-spacing:0.371px;left:6.50px;">Now: 547,241,675 ns  Delta: 0</span>
<div class="a sk1" style="left:306px;top:978px;width:1077px;height:28px;"></div>
<span class="t" style="top:985.46px;font:16px/1 'Liberation Sans',sans-serif;color:#000;letter-spacing:0.042px;left:310.00px;">sim:/circuito</span>
<div class="a sk1" style="left:1391px;top:978px;width:500px;height:28px;"></div>
<svg class="a" style="left:1900px;top:988px;" width="20" height="20" viewBox="0 0 20 20"><path d="M19 3L3 19M19 8L8 19M19 13L13 19" stroke="#a0a0a0" stroke-width="1.2"/></svg>
</body></html>
